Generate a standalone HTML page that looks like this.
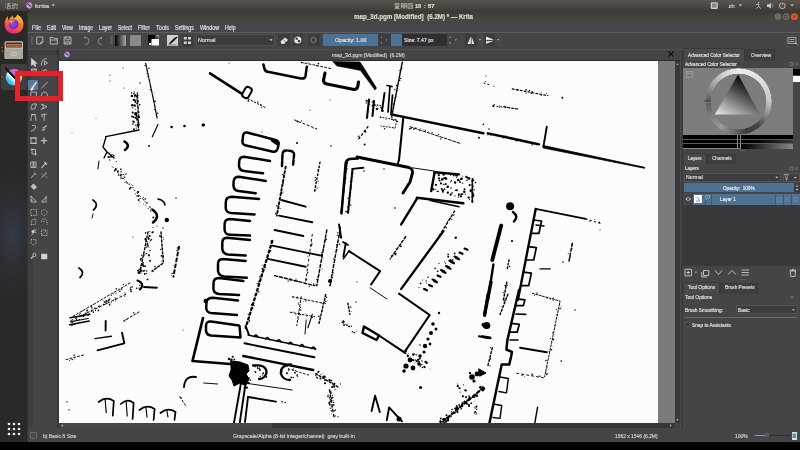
<!DOCTYPE html><html><head><meta charset="utf-8"><style>
*{margin:0;padding:0;box-sizing:border-box}
html,body{width:800px;height:450px;overflow:hidden;background:#000}
body{position:relative;font-family:"Liberation Sans",sans-serif}
.a{position:absolute}
.t{position:absolute;white-space:nowrap;line-height:1;transform-origin:0 0;-webkit-text-stroke:0.18px currentColor}
</style></head><body>
<div class="a" style="left:0px;top:0px;width:800px;height:11.5px;background:linear-gradient(#57524c,#46433e 70%,#3a3733);"></div>
<div class="a" style="left:0px;top:11px;width:28px;height:431px;background:#2b2928;"></div>
<div class="a" style="left:0px;top:160px;width:28px;height:150px;background:radial-gradient(ellipse 26px 62px at 12px 75px,rgba(60,72,98,0.55) 0%,rgba(50,58,78,0.35) 50%,rgba(43,41,40,0) 100%);"></div>
<div class="a" style="left:1px;top:64px;width:26px;height:26px;background:rgba(255,255,255,0.1);border-radius:2px"></div>
<div class="a" style="left:27px;top:11.5px;width:1px;height:431px;background:#353331;"></div>
<div class="a" style="left:28px;top:11.5px;width:772px;height:10.5px;background:linear-gradient(#3d3b37,#4b4843);"></div>
<div class="a" style="left:28px;top:22px;width:772px;height:10px;background:#464548;"></div>
<div class="a" style="left:28px;top:32px;width:772px;height:1px;background:#5d5c5f;"></div>
<div class="a" style="left:28px;top:33px;width:772px;height:16px;background:#454447;"></div>
<div class="a" style="left:28px;top:49px;width:772px;height:0.8px;background:#515053;"></div>
<div class="a" style="left:28px;top:49.8px;width:772px;height:11px;background:#444346;"></div>
<div class="a" style="left:28px;top:49.8px;width:29px;height:6px;background:#3d3c3f;border-right:1px solid #333235;border-bottom:1px solid #333235"></div>
<div class="a" style="left:28px;top:55px;width:31px;height:373px;background:#464447;"></div>
<div class="a" style="left:28px;top:55px;width:5px;height:373px;background:#3f3e41;"></div>
<div class="a" style="left:57px;top:48px;width:2px;height:380px;background:#38373a;"></div>
<div class="a" style="left:28.3px;top:80px;width:9.5px;height:10px;background:#587a9c;"></div>
<div class="a" style="left:59px;top:60px;width:621px;height:1px;background:#2a292b;"></div>
<div class="a" style="left:59px;top:61px;width:599px;height:362px;background:#fcfcfe;"></div>
<div class="a" style="left:658px;top:61px;width:17px;height:362px;background:#7b7a7d;"></div>
<div class="a" style="left:675px;top:61px;width:5px;height:362px;background:#39383b;"></div>
<div class="a" style="left:59px;top:423px;width:616px;height:5px;background:#38373a;"></div>
<div class="a" style="left:675px;top:423px;width:8px;height:5px;background:#444245;"></div>
<div class="a" style="left:680px;top:49.8px;width:3px;height:378px;background:#3d3c3f;border-left:0.6px solid #4a494c"></div>
<div class="a" style="left:683px;top:48px;width:117px;height:380px;background:#464447;"></div>
<div class="a" style="left:683px;top:48px;width:62px;height:13px;background:#4a494c;border:1px solid #39383b;border-bottom:none;border-radius:2px 2px 0 0"></div>
<div class="a" style="left:745px;top:49px;width:30px;height:12px;background:#3e3d40;border:1px solid #39383b;border-bottom:none"></div>
<div class="a" style="left:683px;top:68px;width:110px;height:67px;background:#7d7c7f;"></div>
<div class="a" style="left:705.4px;top:67.5px;width:67px;height:67px;background:conic-gradient(#ececec,#dedede 50deg,#c8c8c8 90deg,#8a8a8a 115deg,#464646 140deg,#3c3c3c 165deg,#6a6a6a 190deg,#9a9a9a 215deg,#7a7a7a 245deg,#5a5a5a 270deg,#9a9a9a 300deg,#d0d0d0 330deg,#ececec);border-radius:50%;-webkit-mask:radial-gradient(circle,transparent 27.6px,#000 28.1px,#000 32.9px,transparent 33.4px);mask:radial-gradient(circle,transparent 27.6px,#000 28.1px,#000 32.9px,transparent 33.4px)"></div>
<div class="a" style="left:793px;top:69px;width:7px;height:6px;background:#000;"></div>
<div class="a" style="left:793px;top:76px;width:7px;height:6px;background:#fff;"></div>
<div class="a" style="left:683px;top:134.7px;width:110px;height:14px;background:#000;"></div>
<div class="a" style="left:683px;top:148.3px;width:110px;height:0.8px;background:#8a8a8a;"></div>
<div class="a" style="left:683px;top:139.2px;width:110px;height:0.7px;background:#5a5a5a;"></div>
<div class="a" style="left:683px;top:143.2px;width:110px;height:0.7px;background:#5a5a5a;"></div>
<div class="a" style="left:740px;top:139.8px;width:53px;height:3.4px;background:linear-gradient(90deg,#000 30%,#3a3a3a);"></div>
<div class="a" style="left:740px;top:144px;width:53px;height:4.5px;background:linear-gradient(90deg,#000 5%,#888);"></div>
<div class="a" style="left:737px;top:135px;width:1px;height:14px;background:#888;"></div>
<div class="a" style="left:740px;top:135px;width:1px;height:14px;background:#888;"></div>
<div class="a" style="left:683px;top:152.5px;width:24px;height:11px;background:#4a494c;border:1px solid #39383b;border-bottom:none;border-radius:2px 2px 0 0"></div>
<div class="a" style="left:707px;top:154px;width:29px;height:9.5px;background:#3e3d40;border:1px solid #39383b;border-bottom:none"></div>
<div class="a" style="left:683.5px;top:172.5px;width:97px;height:9px;background:#3d3c3f;border:1px solid #545356;border-radius:1px"></div>
<div class="a" style="left:782.5px;top:172.5px;width:17.5px;height:9px;background:#3d3c3f;border:1px solid #545356"></div>
<div class="a" style="left:683.5px;top:183px;width:110px;height:9px;background:#4e7294;"></div>
<div class="a" style="left:793.5px;top:183px;width:6.5px;height:9px;background:#3d3c3f;"></div>
<div class="a" style="left:692.5px;top:193.5px;width:107.5px;height:11px;background:#4e7294;"></div>
<div class="a" style="left:693.8px;top:194.8px;width:8.7px;height:8.4px;background:#fafafa;"></div>
<div class="a" style="left:704.5px;top:193.5px;width:0.7px;height:11px;background:#3c5a76;"></div>
<div class="a" style="left:710.5px;top:193.5px;width:0.7px;height:11px;background:#3c5a76;"></div>
<div class="a" style="left:775px;top:193.5px;width:0.7px;height:11px;background:#3c5a76;"></div>
<div class="a" style="left:783.3px;top:193.5px;width:0.7px;height:11px;background:#3c5a76;"></div>
<div class="a" style="left:791px;top:193.5px;width:0.7px;height:11px;background:#3c5a76;"></div>
<div class="a" style="left:683px;top:204.5px;width:117px;height:61.5px;background:#39383b;"></div>
<div class="a" style="left:683px;top:281.5px;width:37px;height:12px;background:#4a494c;border:1px solid #39383b;border-bottom:none;border-radius:2px 2px 0 0"></div>
<div class="a" style="left:720px;top:283px;width:38px;height:10.5px;background:#3e3d40;border:1px solid #39383b;border-bottom:none"></div>
<div class="a" style="left:736px;top:305px;width:61.5px;height:9px;background:#3d3c3f;border:1px solid #545356;border-radius:1px"></div>
<div class="a" style="left:685px;top:317px;width:112px;height:1px;background:#6a696c;"></div>
<div class="a" style="left:684.7px;top:321.9px;width:5.6px;height:5.6px;background:#38373a;border:1px solid #505052"></div>
<div class="a" style="left:30.5px;top:36px;width:2.5px;height:8.5px;background:#59585b;"></div>
<div class="a" style="left:109.8px;top:36px;width:3px;height:8px;background:#59585b;"></div>
<div class="a" style="left:114.8px;top:35px;width:11.3px;height:10.5px;background:linear-gradient(90deg,#000,#a8a8a8);border-radius:1px"></div>
<div class="a" style="left:130px;top:35px;width:11px;height:10.5px;background:#8a898b;border-radius:1px"></div>
<div class="a" style="left:166.5px;top:35px;width:11.5px;height:10.5px;background:#cfcfcf;"></div>
<div class="a" style="left:182px;top:34.5px;width:11px;height:12px;background:#3c3b3e;"></div>
<div class="a" style="left:195.6px;top:33.7px;width:79.4px;height:12.3px;background:#3c3b3e;border:1px solid #515053;border-radius:1px"></div>
<div class="a" style="left:278px;top:34px;width:12px;height:12px;background:#3c3b3e;"></div>
<div class="a" style="left:292.5px;top:34px;width:10.5px;height:12px;background:#3c3b3e;"></div>
<div class="a" style="left:307.5px;top:34px;width:12.5px;height:12px;background:#3c3b3e;"></div>
<div class="a" style="left:322.5px;top:34px;width:55.5px;height:12px;background:#4e7294;"></div>
<div class="a" style="left:378px;top:34px;width:13px;height:12px;background:#3c3b3e;"></div>
<div class="a" style="left:391px;top:34px;width:11.4px;height:12px;background:#4e7294;"></div>
<div class="a" style="left:402.4px;top:34px;width:45px;height:12px;background:#2f2e31;"></div>
<div class="a" style="left:465.4px;top:34px;width:11.6px;height:12px;background:#3c3b3e;"></div>
<div class="a" style="left:483.8px;top:34px;width:11.2px;height:12px;background:#3c3b3e;"></div>
<div class="a" style="left:785.5px;top:34.5px;width:13.5px;height:12.5px;background:#3c3b3e;border:1px solid #505053"></div>
<div class="a" style="left:28px;top:428px;width:772px;height:14px;background:#464447;"></div>
<div class="a" style="left:59px;top:423px;width:213px;height:5px;background:#48474a;"></div>
<div class="a" style="left:755px;top:434.5px;width:34.5px;height:1.5px;background:#2f2e31;"></div>
<div class="a" style="left:755px;top:434.5px;width:10.5px;height:1.5px;background:#7a9cc0;"></div>
<div class="a" style="left:765px;top:432.5px;width:4px;height:4.5px;background:#5a595c;border-radius:1px"></div>
<div class="a" style="left:791.7px;top:432px;width:5.3px;height:8px;background:#d8dfe8;"></div>
<div class="a" style="left:30px;top:432px;width:7px;height:7px;background:transparent;border:1px solid #69686b;border-radius:1px"></div>
<div class="a" style="left:0px;top:442px;width:800px;height:8px;background:#000;"></div>
<svg class="a" style="left:0;top:0" width="800" height="450" viewBox="0 0 800 450"><defs><clipPath id="cv"><rect x="59" y="61" width="599" height="362"/></clipPath></defs><g clip-path="url(#cv)" fill="#000" stroke="#000" stroke-linecap="round" stroke-linejoin="round"><g fill="none"><path d="M145.7,63.3 L154.5,104.4 L157,118" stroke-width="1.23" stroke-dasharray="4 1.2"/><path d="M157.9,124.4 L152.3,136.7" stroke-width="1.14"/><path d="M137.5,95 L138.5,128" stroke-width="1.23" stroke-dasharray="3 2"/><path d="M105.7,136.7 L139,130" stroke-width="1.33"/><path d="M106,137 L103,147 L107,152 L104,158 M107,152 L114,158" stroke-width="1.33"/><path d="M124.5,141.5 Q131,145.5 125,150" stroke-width="2.47"/><path d="M99,161 L97.9,168.9" stroke-width="1.04"/><path d="M112.3,166.7 L147.9,204.4" stroke-width="0.95" stroke-dasharray="1 3"/><path d="M93,200 Q99.5,204.5 93.5,210" stroke-width="1.71"/><path d="M93,214 L92,218" stroke-width="0.95"/><path d="M153,210 Q161,216 153,222.5" stroke-width="2.47"/><path d="M158,199 Q164,200 165,205" stroke-width="1.52"/><path d="M79,268 Q85.5,272.5 80,277.5" stroke-width="1.8"/><path d="M148,232 L140,272" stroke-width="1.33" stroke-dasharray="2 2"/><path d="M161,232 L163.4,263 L152,271" stroke-width="1.42" stroke-dasharray="2 2"/><path d="M179,246.7 L173.4,276.7" stroke-width="1.9" stroke-dasharray="3 3"/><path d="M137.5,280.5 Q145.5,283.5 140,289.5" stroke-width="2.09"/><path d="M144,287 L156.8,287.8" stroke-width="1.9"/><path d="M130,283 L72.3,316.7" stroke-width="0.95" stroke-dasharray="2 2"/><path d="M125.7,294.4 L70,321" stroke-width="0.95" stroke-dasharray="2 2.5"/><path d="M70,317.8 L90,314.4" stroke-width="1.42"/><path d="M72,321.5 L88,318.5" stroke-width="1.23"/><path d="M105.7,321 L105.6,330.5" stroke-width="1.9"/><path d="M123.4,321 L139,312" stroke-width="0.95" stroke-dasharray="2 2"/><path d="M69.5,324.7 L89.3,321" stroke-width="1.42"/><path d="M95,338.6 L111.4,336.3" stroke-width="1.42"/><path d="M97.5,350.3 L124.3,343.3 L122,332.8" stroke-width="1.9"/><path d="M66,359.6 L83.5,355" stroke-width="0.95" stroke-dasharray="2 2"/><path d="M98.6,402 Q106.19999999999999,396 113.8,401 L112.8,415.6" stroke-width="1.71"/><path d="M105.19999999999999,400 L106.19999999999999,412.6" stroke-width="1.14"/><path d="M120.8,404 Q127.19999999999999,398 133.6,403 L132.6,419" stroke-width="1.71"/><path d="M126.19999999999999,402 L127.19999999999999,416" stroke-width="1.14"/><path d="M139.4,410 Q147.0,404 154.6,409 L153.6,420" stroke-width="1.71"/><path d="M146.0,408 L147.0,417" stroke-width="1.14"/><path d="M160.4,413 Q167.95,407 175.5,412 L174.5,420" stroke-width="1.71"/><path d="M166.95,411 L167.95,417" stroke-width="1.14"/><path d="M184,387 Q185,375 196,377" stroke-width="1.9"/><path d="M180,397 L186,406" stroke-width="0.95" stroke-dasharray="2 2"/><path d="M210,73.3 L241.2,93.3" stroke-width="2.56"/><path d="M-2.5,-3.5 L2.5,-3.5 Q5.5,-3.5 5.5,-1 L5.5,1 Q5.5,3.5 2.5,3.5 L-2.5,3.5 Q-5.5,3.5 -5.5,1 L-5.5,-1 Q-5.5,-3.5 -2.5,-3.5 Z" transform="translate(247,92.5) rotate(-60)" stroke-width="2"/><path d="M248,98.9 L265.7,107.8" stroke-width="0.95" stroke-dasharray="1.5 2"/><path d="M263.4,64.4 L264.5,69 Q265.5,72 269,72 L301,78.5 Q305,79 305.5,76 L306.8,66.7" stroke-width="2.47"/><path d="M301.2,62.2 L332.3,68.9" stroke-width="0.95" stroke-dasharray="2 2"/><path d="M325,73 L323.5,80 Q323.5,83.5 327,84 L354,89.5 Q358,89 358,85 L358.5,82" stroke-width="3.13"/><path d="M294.6,120 L316.8,128.9" stroke-width="0.95" stroke-dasharray="2 2.5"/><path d="M247,132.5 L275.5,140 Q279.5,141.5 278.5,145 L277.5,149 Q276.5,152.5 272,151.5 L246,145.5 Q242,144.5 242.5,141 L243,136 Q243.5,132 247,132.5 Z" stroke-width="2.47"/><path d="M282,166 L282.5,154 Q283,150 287,150.5 L291,151 Q294.5,152 294,155.5 L293,166" stroke-width="2.47" stroke-dasharray="5 1.5"/><path d="M270,161 L244,156.7 Q239.3,156.7 239.2,161.5 L239,166 Q239.5,170.5 244,171 L263,173.3" stroke-width="2.47"/><path d="M265.7,181 L239,176.7 Q234,176.7 233.6,181.5 L233.5,186 Q234,190.5 238.5,191 L255.7,193.3" stroke-width="2.47"/><path d="M259,199 L232,196.7 Q226,196.7 225.8,202 L225.7,208 Q226,212.5 231,213 L254.6,214.4" stroke-width="2.47"/><path d="M250,221 L230,219 Q224.8,219 224.6,224 L224.6,230 Q225,234.5 230,234.8 L250,235.6" stroke-width="2.47"/><path d="M285.7,166.7 L276.8,215.6" stroke-width="1.9" stroke-dasharray="2 2.5"/><path d="M281.2,200 L305.7,206.7" stroke-width="1.9"/><path d="M279,215.6 L312.3,222.2" stroke-width="1.9"/><path d="M274.6,230 L303.4,236" stroke-width="1.9"/><path d="M320,162.2 L314.6,191.1" stroke-width="1.42" stroke-dasharray="1.5 2.5"/><path d="M346.8,162.2 L341.2,213.3" stroke-width="1.9" stroke-dasharray="5 1.5"/><path d="M339,224.4 L341.2,237.8" stroke-width="1.9"/><path d="M272.3,140.5 L277.5,144" stroke-width="2.85"/><path d="M250,240 L227,237.8 Q222.3,237.8 222.3,243 L222.3,249 Q223,254 228,254.5 L245.7,255.6" stroke-width="2.47"/><path d="M245.7,261 L223,259 Q218,259 218,264 L218,271 Q219,276 224,276.5 L246.8,277.8" stroke-width="2.47"/><path d="M243.4,281 L219,278 Q213.6,278 213.5,283 L213.4,289 Q214,293.5 219,294 L239,295" stroke-width="2.47"/><path d="M238,300.5 L213,297.8 Q206.8,297.8 206.5,302.5 L206.2,308 Q206.5,312.5 211,313 L237,315" stroke-width="2.47"/><path d="M239,325.5 L211,321.5 Q206,321 206,326 L206,331 Q206.5,335 211,335.5 L240.5,337.5 L239.5,326" stroke-width="2.47"/><path d="M272.3,241 L245.7,327.8" stroke-width="2.28" stroke-dasharray="2 3"/><path d="M272.3,245.6 L321.2,255.6" stroke-width="1.9"/><path d="M267.9,258.9 L305.7,266.7" stroke-width="1.9"/><path d="M274.6,275.6 L314.6,285.6" stroke-width="1.42" stroke-dasharray="3 2"/><path d="M326.8,230 L316.8,285.6" stroke-width="1.42" stroke-dasharray="3 2"/><path d="M340,230 L330,285.6" stroke-width="1.42" stroke-dasharray="3 2"/><path d="M312.3,234.4 L305.7,281" stroke-width="0.95" stroke-dasharray="2 3"/><path d="M345.7,243.3 L343.4,256.7" stroke-width="1.9"/><path d="M292.3,296.7 L323.4,303.3" stroke-width="0.95" stroke-dasharray="2 2"/><path d="M301.2,296.7 L296.8,325.6" stroke-width="0.95" stroke-dasharray="2 2"/><path d="M312.3,314.4 L307.9,327.8" stroke-width="1.14"/><path d="M325.7,294.4 L319,323.3" stroke-width="1.42" stroke-dasharray="2 2"/><path d="M290.1,312.2 L314.6,316.7" stroke-width="0.95" stroke-dasharray="2 2"/><path d="M245.6,325.8 L249,335" stroke-width="1.9"/><path d="M248,335 L315.6,349" stroke-width="1.42"/><path d="M254.0,336.6568047337278 Q256.0,333.1568047337278 258.0,337.1568047337278" stroke-width="1.42"/><path d="M265.5,339.03846153846155 Q267.5,335.53846153846155 269.5,339.53846153846155" stroke-width="1.42"/><path d="M277.0,341.42011834319527 Q279.0,337.92011834319527 281.0,341.92011834319527" stroke-width="1.42"/><path d="M288.5,343.801775147929 Q290.5,340.301775147929 292.5,344.301775147929" stroke-width="1.42"/><path d="M300.0,346.1834319526627 Q302.0,342.6834319526627 304.0,346.6834319526627" stroke-width="1.42"/><path d="M311.5,348.56508875739644 Q313.5,345.06508875739644 315.5,349.06508875739644" stroke-width="1.42"/><path d="M244.5,343.3 L314.4,357.3" stroke-width="1.9"/><path d="M243.3,356 L313.2,370" stroke-width="2.38"/><path d="M203,318 L192.5,361 L230,364" stroke-width="2.66"/><path d="M253,365.5 Q267,364 266.5,373 Q265,378.5 259,379" stroke-width="2.28"/><path d="M291,364.5 Q280,365 281,374 Q283,380 290,380" stroke-width="2.28"/><path d="M292,370 L308.6,375" stroke-width="0.95" stroke-dasharray="1.5 2.5"/><path d="M315.6,373.6 L338.9,387.6" stroke-width="1.42" stroke-dasharray="2 2"/><path d="M329.5,390 L334.2,418" stroke-width="1.42" stroke-dasharray="2 3"/><path d="M241,383 L234,422.6" stroke-width="1.9"/><path d="M245.6,383 L239.8,422.6" stroke-width="1.9"/><path d="M244.5,383 L292.2,390" stroke-width="0.95"/><path d="M248,397 L276,401.6" stroke-width="1.9"/><path d="M248,397 L245,422" stroke-width="1.9"/><path d="M281.7,401.6 L287,403" stroke-width="0.95" stroke-dasharray="1 2"/><path d="M203.7,383 L217.6,384" stroke-width="0.95"/><path d="M306.2,320 L305,334" stroke-width="0.95"/><path d="M402.3,62.2 L392.3,113.3" stroke-width="1.42" stroke-dasharray="2.5 1"/><path d="M387,85.5 L392,86.5 M390,86 L388,112 M392.5,95 L391,113" stroke-width="1.71"/><path d="M384.5,93 L382,111" stroke-width="1.9"/><path d="M369,99.5 L367,118 M374,101 L372.5,116" stroke-width="2.09"/><path d="M391.2,114.4 L483.4,133.3" stroke-width="2.47"/><path d="M403.4,116.7 L399,160 L397.9,163.3" stroke-width="2.09"/><path d="M410,126.7 L460,143.3" stroke-width="0.95" stroke-dasharray="3 1.5"/><path d="M367.9,126.7 L357.9,140" stroke-width="1.42" stroke-dasharray="1.5 3"/><path d="M380,117 L396.8,120 L395,128 L381,126" stroke-width="0.95" stroke-dasharray="1 2"/><path d="M357,157 L409,167.5 Q413,169 412.5,173 L410,182 L403,193" stroke-width="2.85"/><path d="M358,158.5 L349.5,159 Q345.5,160.5 345.5,164.5 L341.5,213.5" stroke-width="2.47"/><path d="M352.5,169.5 L348,213" stroke-width="2.09" stroke-dasharray="6 1.5"/><path d="M352.3,168.9 L363.4,167.8" stroke-width="1.9"/><path d="M412.3,167.8 L434.6,171.1" stroke-width="0.95"/><path d="M434.6,172.2 L459,174.4" stroke-width="2.38"/><path d="M434.6,172.2 L431.2,191.1" stroke-width="2.38"/><path d="M416.8,197.8 L463.4,203.3" stroke-width="2.38"/><path d="M430.1,200.5 L459,206.7" stroke-width="1.42"/><path d="M416.8,198.9 L401.2,224.4" stroke-width="2.38"/><path d="M472.3,180 L472.3,202.2" stroke-width="1.9" stroke-dasharray="2 2"/><path d="M454.6,211 L436.8,240" stroke-width="1.42" stroke-dasharray="2 2.5"/><path d="M340,226.7 L340,235.6" stroke-width="1.42"/><path d="M443.4,231.1 L401.2,288.9" stroke-width="2.38"/><path d="M399,293.7 L429.7,315 L404.3,352.3" stroke-width="2.09"/><path d="M349,251.1 L380.1,271.1 L371.2,284.4" stroke-width="1.9"/><path d="M349,251 L343.4,258.9" stroke-width="1.42"/><path d="M370.1,287.8 L386.8,298.9" stroke-width="0.95"/><path d="M343,242 L348,245" stroke-width="1.71"/><path d="M405.7,236.7 L390.1,258.9" stroke-width="1.42" stroke-dasharray="2.5 2"/><path d="M424.0,289.0 l3,1.3" stroke-width="2.09"/><path d="M432.5,279.5 l3,1.3" stroke-width="2.09"/><path d="M441.0,270.0 l3,1.3" stroke-width="2.09"/><path d="M449.5,260.5 l3,1.3" stroke-width="2.09"/><path d="M429.0,285.0 l3,1.3" stroke-width="2.09"/><path d="M437.5,275.5 l3,1.3" stroke-width="2.09"/><path d="M446.0,266.0 l3,1.3" stroke-width="2.09"/><path d="M454.5,256.5 l3,1.3" stroke-width="2.09"/><path d="M434.0,281.0 l3,1.3" stroke-width="2.09"/><path d="M442.5,271.5 l3,1.3" stroke-width="2.09"/><path d="M451.0,262.0 l3,1.3" stroke-width="2.09"/><path d="M459.5,252.5 l3,1.3" stroke-width="2.09"/><path d="M447.5,267.5 l3,1.3" stroke-width="2.09"/><path d="M456.0,258.0 l3,1.3" stroke-width="2.09"/><path d="M464.5,248.5 l3,1.3" stroke-width="2.09"/><path d="M487.9,294.4 L484.6,315.6" stroke-width="2.85"/><path d="M347.9,303.3 L350,314.4" stroke-width="1.42" stroke-dasharray="1.5 2"/><path d="M362.5,333 L364,326.5 L379,335.5 L376.5,340 Z" stroke-width="2.47"/><path d="M379,335.5 L404.3,352.3" stroke-width="2.09"/><path d="M371.6,411 L375.1,395.8 L379.8,412" stroke-width="1.9"/><path d="M386.8,420.2 L389.1,407.4 L402,421.4" stroke-width="1.9"/><path d="M483.5,387.6 L441.6,422.6" stroke-width="2.09" stroke-dasharray="3 2.5"/><path d="M478.9,336.3 L489,338" stroke-width="1.9"/><path d="M512.3,88.9 L547.9,95.6" stroke-width="1.14" stroke-dasharray="2 2"/><path d="M503.4,106.7 L516.8,108.9" stroke-width="0.95" stroke-dasharray="2 2"/><path d="M493,106 L518,109" stroke-width="0.95" stroke-dasharray="1 3"/><path d="M487.9,133.3 L539,144.4" stroke-width="2.38" stroke-dasharray="6 1"/><path d="M546.8,126.7 L543.4,146.7" stroke-width="1.9"/><path d="M484,83 L490,85" stroke-width="0.95" stroke-dasharray="1 3"/><path d="M535.7,208.9 L585.7,218.9" stroke-width="1.9"/><path d="M585.7,218.9 L600,223.3" stroke-width="0.95" stroke-dasharray="1.5 3"/><path d="M535.7,209 L517.9,300" stroke-width="2.38"/><path d="M533.5483516483517,220 L541.5483516483517,221 L538.9468131868132,233.3 L530.9468131868132,233.3" stroke-width="1.71"/><path d="M528.3257142857143,246.7 L536.3257142857143,247.7 L533.7241758241759,260 L525.7241758241759,260" stroke-width="1.71"/><path d="M523.3378021978023,272.2 L531.3378021978023,273.2 L528.7167032967034,285.6 L520.7167032967034,285.6" stroke-width="1.71"/><path d="M501.2,225.6 L492.3,260" stroke-width="3.8"/><path d="M493.4,264.4 L487.9,300" stroke-width="2.38"/><path d="M513,212 Q519,216.5 514,221.5" stroke-width="2.47"/><path d="M572.3,243.3 L569,261.1" stroke-width="1.42" stroke-dasharray="3 2"/><path d="M540.1,268.9 L550.1,268.9" stroke-width="1.42"/><path d="M506.8,282.2 L503.4,300" stroke-width="1.42" stroke-dasharray="2 2"/><path d="M509,260 L507,270" stroke-width="1.42" stroke-dasharray="1.5 2"/><path d="M519,290 L507.4,340 L506.4,349.5 L512,352 L511,357 L509.2,364.6 L501.7,364.6 L489.4,423.2" stroke-width="2.47"/><path d="M516.9352,298.9 L524.9352,299.9 L523.3808,305.6 L515.3808,305.6" stroke-width="1.71"/><path d="M511.2744,323.3 L519.2744,324.3 L517.2096,332.2 L509.2096,332.2" stroke-width="1.71"/><path d="M516,314 L525.7,314.4" stroke-width="1.71"/><path d="M510,340 L518,340" stroke-width="1.71"/><path d="M507.9,294.4 L500.1,314.4" stroke-width="1.42" stroke-dasharray="2 2"/><path d="M492.3,347.8 L487.9,365.6" stroke-width="1.42" stroke-dasharray="2 2"/><path d="M491,282 L484.6,314.4" stroke-width="3.42"/><path d="M482.3,336.7 L490.1,337.8" stroke-width="2.85"/><path d="M532.3,293.3 L560.1,301.1 L550.1,350 L544.6,376.7" stroke-width="0.95" stroke-dasharray="2 1.5"/><path d="M520.1,347.8 L546.8,352.2" stroke-width="1.9"/><path d="M516.8,373.3 L543.4,377.8" stroke-width="0.95" stroke-dasharray="2 3"/><path d="M500,377 L508.3,378.5 L506.5,392.9 L499,391.5" stroke-width="1.42"/><path d="M494.5,404.3 L501.7,405.5 L500,418.4 L493,417.5" stroke-width="1.42"/><path d="M537.6,407.1 L534.8,423.2" stroke-width="1.42"/><path d="M536,225 L544,226" stroke-width="1.42"/></g><g><path class="f" d="M333,61.5 L360,62 L363,66.5 L376.5,88 L375,90 L360.5,70.5 L348,68 L337,66 Z" stroke-width="0.6"/><path class="f" d="M231,361 L240,362 L248,365 L249,371 L246,374 L249,379 L246,385 L240,383 L234,386 L232,380 L229,376 L231,370 Z" stroke-width="1"/><path class="f" d="M543.4,145.5 L644.6,167.3 L644.6,168.3 L543.4,148 Z" stroke-width="0.8"/><path class="f" d="M479,369 L486,373 L480,376 Z" stroke-width="1"/></g><g stroke="none"><circle cx="137.2" cy="103.5" r="0.96"/><circle cx="133.9" cy="93.8" r="0.76"/><circle cx="134.1" cy="93.3" r="0.53"/><circle cx="138.1" cy="107.7" r="0.56"/><circle cx="132.8" cy="107.7" r="0.59"/><circle cx="133.7" cy="99.8" r="1.16"/><circle cx="136.2" cy="113.5" r="1.18"/><circle cx="131.6" cy="93.0" r="0.70"/><circle cx="137.0" cy="96.5" r="0.72"/><circle cx="138.3" cy="122.7" r="0.91"/><circle cx="136.5" cy="115.9" r="0.88"/><circle cx="137.2" cy="93.3" r="0.64"/><circle cx="136.2" cy="117.5" r="0.72"/><circle cx="135.8" cy="113.8" r="0.71"/><circle cx="134.6" cy="122.1" r="0.67"/><circle cx="135.3" cy="113.4" r="1.11"/><circle cx="137.3" cy="119.4" r="1.19"/><circle cx="134.9" cy="95.6" r="1.03"/><circle cx="134.5" cy="96.9" r="0.53"/><circle cx="133.8" cy="117.2" r="0.90"/><circle cx="137.5" cy="125.1" r="0.99"/><circle cx="134.9" cy="114.2" r="0.82"/><circle cx="133.0" cy="124.0" r="0.83"/><circle cx="138.7" cy="116.7" r="0.99"/><circle cx="132.2" cy="116.5" r="1.08"/><circle cx="135.5" cy="102.0" r="0.97"/><circle cx="134.3" cy="91.9" r="0.62"/><circle cx="137.4" cy="95.4" r="1.04"/><circle cx="136.1" cy="95.9" r="0.77"/><circle cx="139.1" cy="124.8" r="0.81"/><circle cx="132.7" cy="112.6" r="1.07"/><circle cx="137.7" cy="124.6" r="0.79"/><circle cx="132.2" cy="105.2" r="1.17"/><circle cx="136.6" cy="96.7" r="0.66"/><circle cx="134.7" cy="100.1" r="0.91"/><circle cx="138.1" cy="101.0" r="0.79"/><circle cx="134.5" cy="105.4" r="1.17"/><circle cx="135.6" cy="117.9" r="0.93"/><circle cx="138.8" cy="117.2" r="1.13"/><circle cx="133.3" cy="121.6" r="1.06"/><circle cx="135.7" cy="106.3" r="0.57"/><circle cx="138.6" cy="115.5" r="0.55"/><circle cx="136.9" cy="99.0" r="0.74"/><circle cx="137.6" cy="92.8" r="0.61"/><circle cx="135.2" cy="94.9" r="0.52"/><circle cx="135.4" cy="125.2" r="0.60"/><circle cx="135.7" cy="100.8" r="0.75"/><circle cx="131.9" cy="95.9" r="1.20"/><circle cx="135.3" cy="109.2" r="0.56"/><circle cx="135.4" cy="94.9" r="0.69"/><circle cx="138.4" cy="123.2" r="0.52"/><circle cx="136.2" cy="128.1" r="0.60"/><circle cx="138.7" cy="112.0" r="0.87"/><circle cx="133.9" cy="129.3" r="0.99"/><circle cx="135.6" cy="101.1" r="0.62"/><circle cx="171.6" cy="127" r="1.3"/><circle cx="184.5" cy="126" r="1.3"/><circle cx="203.5" cy="125" r="1.4"/><circle cx="149" cy="146" r="0.9"/><circle cx="110" cy="75" r="0.6"/><circle cx="110" cy="81" r="0.6"/><circle cx="124" cy="88" r="0.6"/><circle cx="140" cy="83" r="0.7"/><circle cx="123" cy="68" r="0.5"/><circle cx="96" cy="118" r="0.4"/><circle cx="72" cy="133" r="0.4"/><circle cx="166.8" cy="220" r="2.2"/><circle cx="147" cy="203" r="0.8"/><circle cx="150" cy="207" r="0.8"/><circle cx="176" cy="198" r="0.7"/><circle cx="153" cy="232" r="0.8"/><circle cx="160" cy="236" r="0.9"/><circle cx="133" cy="237" r="0.6"/><circle cx="163" cy="228" r="0.7"/><circle cx="157" cy="226" r="0.6"/><circle cx="141.9" cy="263.9" r="0.95"/><circle cx="147.4" cy="244.8" r="0.97"/><circle cx="138.4" cy="273.0" r="0.96"/><circle cx="140.5" cy="265.8" r="0.56"/><circle cx="145.0" cy="252.9" r="0.42"/><circle cx="149.8" cy="231.5" r="0.58"/><circle cx="140.5" cy="260.0" r="0.71"/><circle cx="138.2" cy="270.7" r="1.07"/><circle cx="147.1" cy="246.3" r="0.56"/><circle cx="148.7" cy="239.0" r="0.84"/><circle cx="139.2" cy="269.3" r="0.74"/><circle cx="141.7" cy="258.4" r="0.46"/><circle cx="141.0" cy="258.7" r="0.95"/><circle cx="142.4" cy="263.0" r="0.52"/><circle cx="142.7" cy="264.9" r="0.96"/><circle cx="140.8" cy="272.9" r="0.68"/><circle cx="139.4" cy="271.4" r="0.52"/><circle cx="149.6" cy="235.9" r="1.03"/><circle cx="143.5" cy="265.8" r="0.98"/><circle cx="139.4" cy="273.0" r="0.65"/><circle cx="145.9" cy="254.5" r="0.41"/><circle cx="139.5" cy="272.6" r="0.77"/><circle cx="140.9" cy="271.1" r="1.01"/><circle cx="143.0" cy="266.6" r="0.58"/><circle cx="147.6" cy="243.2" r="0.81"/><circle cx="147.1" cy="241.5" r="0.49"/><circle cx="141.5" cy="270.2" r="0.72"/><circle cx="141.8" cy="255.3" r="0.69"/><circle cx="140.7" cy="270.4" r="0.77"/><circle cx="146.6" cy="253.5" r="0.71"/><circle cx="205.7" cy="301" r="2.2"/><circle cx="113.7" cy="155.6" r="0.88"/><circle cx="111.1" cy="156.8" r="0.84"/><circle cx="120.7" cy="169.3" r="0.71"/><circle cx="118.4" cy="170.8" r="0.46"/><circle cx="121.1" cy="169.2" r="0.57"/><circle cx="124.7" cy="177.3" r="0.74"/><circle cx="122.4" cy="178.2" r="0.67"/><circle cx="121.1" cy="171.8" r="0.71"/><circle cx="123.2" cy="174.4" r="0.72"/><circle cx="115.8" cy="168.7" r="0.82"/><circle cx="125.0" cy="182.3" r="0.56"/><circle cx="117.7" cy="171.5" r="0.90"/><circle cx="112.0" cy="154.4" r="0.67"/><circle cx="110.0" cy="152.6" r="0.44"/><circle cx="121.0" cy="174.7" r="0.94"/><circle cx="109.5" cy="157.0" r="0.80"/><circle cx="108.4" cy="157.1" r="0.98"/><circle cx="109.8" cy="160.0" r="0.64"/><circle cx="115.8" cy="169.2" r="0.90"/><circle cx="111.1" cy="156.3" r="0.71"/><circle cx="116.3" cy="161.5" r="0.59"/><circle cx="126.0" cy="173.9" r="0.73"/><circle cx="143.3" cy="197.3" r="0.60"/><circle cx="145.5" cy="205.0" r="0.44"/><circle cx="153.3" cy="217.6" r="0.98"/><circle cx="133.7" cy="187.5" r="0.42"/><circle cx="150.6" cy="209.1" r="0.48"/><circle cx="138.6" cy="200.0" r="0.89"/><circle cx="138.1" cy="192.0" r="0.95"/><circle cx="143.3" cy="204.0" r="0.45"/><circle cx="130.5" cy="187.5" r="0.66"/><circle cx="129.7" cy="188.9" r="0.78"/><circle cx="152.0" cy="209.1" r="0.91"/><circle cx="130.0" cy="188.5" r="0.67"/><circle cx="138.2" cy="196.0" r="0.96"/><circle cx="138.4" cy="192.2" r="0.72"/><circle cx="137.8" cy="191.2" r="0.50"/><circle cx="132.7" cy="185.5" r="0.59"/><circle cx="136.4" cy="195.7" r="0.57"/><circle cx="144.0" cy="199.8" r="0.61"/><circle cx="131.6" cy="184.7" r="0.41"/><circle cx="148.1" cy="208.6" r="0.51"/><circle cx="139.8" cy="201.8" r="0.46"/><circle cx="150.8" cy="211.0" r="0.70"/><circle cx="146.6" cy="271.0" r="0.75"/><circle cx="143.2" cy="262.5" r="0.64"/><circle cx="144.4" cy="270.6" r="0.85"/><circle cx="149.0" cy="247.4" r="0.44"/><circle cx="152.3" cy="232.4" r="0.92"/><circle cx="151.1" cy="239.3" r="0.46"/><circle cx="143.2" cy="271.0" r="0.87"/><circle cx="150.4" cy="240.7" r="0.61"/><circle cx="150.1" cy="250.5" r="0.71"/><circle cx="145.5" cy="239.2" r="1.08"/><circle cx="149.0" cy="255.3" r="1.08"/><circle cx="149.5" cy="242.1" r="0.40"/><circle cx="148.3" cy="246.0" r="0.75"/><circle cx="149.0" cy="236.1" r="0.40"/><circle cx="151.5" cy="239.8" r="0.68"/><circle cx="153.1" cy="227.6" r="0.61"/><circle cx="148.2" cy="237.8" r="0.77"/><circle cx="145.1" cy="266.2" r="0.90"/><circle cx="146.4" cy="273.4" r="0.63"/><circle cx="147.5" cy="279.4" r="0.91"/><circle cx="150.0" cy="260.7" r="0.98"/><circle cx="144.7" cy="274.0" r="0.91"/><circle cx="88.2" cy="315.3" r="0.71"/><circle cx="106.3" cy="300.9" r="0.88"/><circle cx="86.0" cy="313.5" r="0.94"/><circle cx="95.1" cy="307.9" r="0.54"/><circle cx="139.0" cy="288.0" r="0.62"/><circle cx="132.2" cy="286.9" r="0.74"/><circle cx="98.8" cy="306.3" r="0.81"/><circle cx="109.6" cy="304.7" r="0.88"/><circle cx="91.4" cy="311.2" r="0.72"/><circle cx="98.4" cy="310.4" r="0.84"/><circle cx="124.8" cy="296.1" r="0.56"/><circle cx="93.4" cy="312.1" r="0.84"/><circle cx="76.6" cy="319.2" r="0.63"/><circle cx="108.3" cy="300.8" r="0.86"/><circle cx="99.5" cy="305.8" r="0.45"/><circle cx="131.1" cy="291.5" r="0.85"/><circle cx="120.0" cy="295.3" r="0.41"/><circle cx="136.7" cy="288.3" r="0.80"/><circle cx="94.5" cy="308.3" r="0.57"/><circle cx="106.5" cy="303.3" r="0.68"/><circle cx="131.2" cy="287.1" r="0.52"/><circle cx="75.2" cy="316.9" r="0.41"/><circle cx="109.3" cy="299.4" r="0.98"/><circle cx="111.4" cy="302.0" r="0.53"/><circle cx="79.4" cy="319.6" r="0.75"/><circle cx="130.7" cy="289.8" r="0.97"/><circle cx="130.5" cy="287.9" r="0.71"/><circle cx="81.8" cy="315.0" r="0.54"/><circle cx="81.7" cy="316.5" r="0.41"/><circle cx="139.8" cy="285.2" r="0.67"/><circle cx="106.1" cy="303.8" r="0.57"/><circle cx="103.1" cy="300.7" r="0.40"/><circle cx="81.3" cy="315.1" r="0.46"/><circle cx="73.0" cy="321.5" r="0.85"/><circle cx="105.9" cy="302.2" r="0.60"/><circle cx="69.8" cy="324.5" r="0.58"/><circle cx="99.3" cy="307.3" r="0.42"/><circle cx="113.8" cy="293.7" r="0.54"/><circle cx="74.0" cy="324.1" r="0.53"/><circle cx="95.5" cy="310.4" r="0.59"/><circle cx="70.9" cy="321.6" r="0.81"/><circle cx="87.1" cy="310.7" r="0.87"/><circle cx="91.8" cy="309.0" r="0.42"/><circle cx="83.5" cy="316.4" r="0.78"/><circle cx="88.5" cy="314.3" r="0.42"/><circle cx="74.9" cy="324.4" r="0.64"/><circle cx="103.5" cy="304.4" r="0.77"/><circle cx="72.0" cy="325.4" r="0.73"/><circle cx="67" cy="402" r="0.7"/><circle cx="69" cy="410" r="0.7"/><circle cx="203" cy="125" r="1.5"/><circle cx="297" cy="143" r="1"/><circle cx="331" cy="146" r="0.8"/><circle cx="330" cy="281" r="2"/><circle cx="234.4" cy="368.3" r="0.82"/><circle cx="234.9" cy="361.7" r="0.67"/><circle cx="248.9" cy="383.5" r="0.68"/><circle cx="244.4" cy="387.5" r="0.86"/><circle cx="234.0" cy="361.2" r="0.57"/><circle cx="239.5" cy="365.6" r="0.69"/><circle cx="233.3" cy="367.3" r="1.21"/><circle cx="246.0" cy="378.8" r="0.83"/><circle cx="241.2" cy="372.6" r="0.77"/><circle cx="231.4" cy="359.8" r="1.27"/><circle cx="230.9" cy="363.3" r="1.00"/><circle cx="250.4" cy="380.2" r="0.72"/><circle cx="234.6" cy="365.7" r="0.86"/><circle cx="246.8" cy="387.6" r="1.20"/><circle cx="232.7" cy="356.8" r="1.07"/><circle cx="248.8" cy="383.1" r="0.97"/><circle cx="229.0" cy="359.1" r="1.24"/><circle cx="243.8" cy="384.3" r="1.28"/><circle cx="237.2" cy="363.4" r="0.62"/><circle cx="238.4" cy="375.0" r="1.25"/><circle cx="243.3" cy="379.9" r="1.11"/><circle cx="238.1" cy="372.3" r="0.53"/><circle cx="248.4" cy="378.2" r="1.24"/><circle cx="244.6" cy="375.2" r="0.60"/><circle cx="232.6" cy="367.6" r="1.06"/><circle cx="234.4" cy="359.5" r="0.92"/><circle cx="242.4" cy="374.3" r="0.68"/><circle cx="246.2" cy="371.7" r="0.74"/><circle cx="234.5" cy="375.6" r="1.02"/><circle cx="248.5" cy="382.8" r="0.69"/><circle cx="255.1" cy="371.8" r="0.82"/><circle cx="259.6" cy="368.3" r="0.70"/><circle cx="262.4" cy="374.1" r="0.55"/><circle cx="260.3" cy="376.2" r="0.54"/><circle cx="255.1" cy="366.7" r="0.65"/><circle cx="263.4" cy="373.2" r="0.88"/><circle cx="262.8" cy="375.2" r="0.52"/><circle cx="266.4" cy="376.8" r="0.89"/><circle cx="257.9" cy="368.3" r="0.86"/><circle cx="255.7" cy="372.2" r="0.70"/><circle cx="257.4" cy="367.8" r="0.65"/><circle cx="260.2" cy="376.3" r="0.49"/><circle cx="259.9" cy="370.1" r="0.98"/><circle cx="257.5" cy="366.6" r="0.44"/><circle cx="287.0" cy="373.2" r="0.93"/><circle cx="291.4" cy="377.4" r="0.96"/><circle cx="288.8" cy="369.1" r="0.96"/><circle cx="295.2" cy="373.0" r="0.80"/><circle cx="288.8" cy="370.6" r="0.60"/><circle cx="287.2" cy="366.5" r="0.57"/><circle cx="286.2" cy="373.0" r="0.47"/><circle cx="297.6" cy="376.2" r="0.61"/><circle cx="293.3" cy="377.6" r="0.66"/><circle cx="283.8" cy="367.4" r="0.62"/><circle cx="297.0" cy="375.7" r="0.62"/><circle cx="297.3" cy="374.7" r="0.65"/><circle cx="293.4" cy="377.2" r="0.42"/><circle cx="285.1" cy="365.3" r="0.95"/><circle cx="320.4" cy="378.6" r="1.03"/><circle cx="324.4" cy="376.5" r="1.07"/><circle cx="331.4" cy="380.6" r="0.90"/><circle cx="323.8" cy="376.2" r="0.40"/><circle cx="332.2" cy="387.2" r="0.84"/><circle cx="340.5" cy="383.9" r="0.56"/><circle cx="325.0" cy="383.3" r="1.07"/><circle cx="325.7" cy="377.1" r="0.70"/><circle cx="325.6" cy="383.3" r="0.53"/><circle cx="334.1" cy="386.7" r="0.98"/><circle cx="333.9" cy="385.3" r="0.63"/><circle cx="323.6" cy="376.8" r="0.95"/><circle cx="318.2" cy="372.1" r="0.93"/><circle cx="323.0" cy="373.7" r="0.42"/><circle cx="329.5" cy="380.1" r="1.09"/><circle cx="335.1" cy="389.6" r="0.59"/><circle cx="318.8" cy="371.5" r="0.75"/><circle cx="333.0" cy="383.3" r="0.56"/><circle cx="324.9" cy="380.1" r="0.87"/><circle cx="332.3" cy="386.6" r="0.87"/><circle cx="316.6" cy="377.2" r="0.61"/><circle cx="329.7" cy="380.6" r="0.92"/><circle cx="321.0" cy="374.3" r="0.57"/><circle cx="317.3" cy="377.9" r="0.80"/><circle cx="323.6" cy="377.2" r="1.09"/><circle cx="333.6" cy="404.8" r="0.89"/><circle cx="330.4" cy="410.4" r="0.46"/><circle cx="329.9" cy="404.7" r="0.90"/><circle cx="338.0" cy="416.7" r="0.58"/><circle cx="330.8" cy="393.1" r="0.98"/><circle cx="330.2" cy="408.2" r="0.62"/><circle cx="335.2" cy="415.9" r="0.56"/><circle cx="331.6" cy="414.0" r="0.46"/><circle cx="332.1" cy="408.1" r="0.53"/><circle cx="333.0" cy="400.5" r="0.52"/><circle cx="329.5" cy="397.8" r="0.79"/><circle cx="332.5" cy="395.3" r="0.60"/><circle cx="335.3" cy="409.9" r="0.59"/><circle cx="327.9" cy="396.6" r="0.73"/><circle cx="330.8" cy="391.3" r="0.64"/><circle cx="331.6" cy="406.7" r="0.45"/><circle cx="328.2" cy="395.2" r="0.65"/><circle cx="331.4" cy="398.2" r="0.97"/><circle cx="330.1" cy="399.5" r="0.61"/><circle cx="329.2" cy="403.1" r="1.00"/><circle cx="377.5" cy="105.0" r="0.84"/><circle cx="373.5" cy="101.1" r="0.94"/><circle cx="377.3" cy="109.3" r="0.64"/><circle cx="391.7" cy="115.7" r="0.50"/><circle cx="366.3" cy="100.5" r="0.78"/><circle cx="393.7" cy="114.3" r="0.77"/><circle cx="376.7" cy="106.7" r="0.49"/><circle cx="374.1" cy="105.2" r="0.96"/><circle cx="369.2" cy="101.9" r="0.88"/><circle cx="395.0" cy="115.9" r="0.48"/><circle cx="391.8" cy="119.4" r="0.69"/><circle cx="366.2" cy="103.1" r="0.63"/><circle cx="391.8" cy="116.9" r="0.89"/><circle cx="369.7" cy="104.3" r="0.53"/><circle cx="376.6" cy="109.0" r="0.90"/><circle cx="372.2" cy="101.9" r="0.64"/><circle cx="381.4" cy="108.7" r="0.47"/><circle cx="372.5" cy="105.6" r="0.94"/><circle cx="367.0" cy="101.1" r="0.85"/><circle cx="366.0" cy="102.4" r="0.47"/><circle cx="383.2" cy="111.0" r="0.78"/><circle cx="375.1" cy="105.1" r="0.75"/><circle cx="377.8" cy="108.5" r="0.67"/><circle cx="380.2" cy="105.5" r="0.77"/><circle cx="381.0" cy="107.5" r="0.86"/><circle cx="364.6" cy="144.4" r="1"/><circle cx="483.4" cy="124.4" r="0.8"/><circle cx="479" cy="137.8" r="1"/><circle cx="467.2" cy="180.3" r="0.64"/><circle cx="455.4" cy="175.7" r="0.60"/><circle cx="453.7" cy="175.4" r="0.85"/><circle cx="457.0" cy="175.4" r="1.01"/><circle cx="439.0" cy="178.3" r="1.12"/><circle cx="457.0" cy="175.5" r="0.90"/><circle cx="450.6" cy="181.8" r="0.61"/><circle cx="469.7" cy="185.1" r="1.09"/><circle cx="469.0" cy="178.5" r="1.29"/><circle cx="455.1" cy="182.6" r="1.23"/><circle cx="442.3" cy="179.3" r="1.24"/><circle cx="438.8" cy="175.2" r="1.10"/><circle cx="441.9" cy="180.1" r="0.72"/><circle cx="469.0" cy="178.1" r="0.90"/><circle cx="473.1" cy="179.2" r="0.71"/><circle cx="456.5" cy="177.6" r="0.53"/><circle cx="443.7" cy="174.4" r="1.25"/><circle cx="462.7" cy="183.2" r="0.63"/><circle cx="467.9" cy="177.7" r="0.92"/><circle cx="461.6" cy="178.7" r="1.20"/><circle cx="458.1" cy="180.0" r="1.21"/><circle cx="439.6" cy="180.5" r="1.00"/><circle cx="451.4" cy="180.7" r="0.71"/><circle cx="475.5" cy="182.6" r="0.79"/><circle cx="466.7" cy="180.1" r="0.64"/><circle cx="466.3" cy="176.9" r="1.16"/><circle cx="446.0" cy="178.6" r="1.29"/><circle cx="459.2" cy="180.8" r="0.75"/><circle cx="436.6" cy="172.3" r="0.62"/><circle cx="460.7" cy="179.2" r="0.91"/><circle cx="472.3" cy="178.5" r="0.68"/><circle cx="462.7" cy="176.1" r="0.50"/><circle cx="450.7" cy="175.0" r="0.79"/><circle cx="444.9" cy="178.0" r="0.97"/><circle cx="444.0" cy="178.2" r="0.88"/><circle cx="438.3" cy="191.6" r="0.69"/><circle cx="441.0" cy="183.6" r="1.01"/><circle cx="468.2" cy="197.5" r="0.82"/><circle cx="445.8" cy="183.9" r="1.02"/><circle cx="456.9" cy="190.2" r="1.02"/><circle cx="450.7" cy="194.7" r="1.09"/><circle cx="443.0" cy="192.4" r="0.54"/><circle cx="455.5" cy="190.4" r="0.69"/><circle cx="435.7" cy="189.3" r="0.51"/><circle cx="455.0" cy="195.8" r="0.61"/><circle cx="441.7" cy="189.0" r="0.91"/><circle cx="458.9" cy="195.5" r="0.64"/><circle cx="446.9" cy="187.2" r="0.54"/><circle cx="468.9" cy="197.6" r="1.07"/><circle cx="433.4" cy="189.4" r="1.10"/><circle cx="452.0" cy="193.0" r="0.86"/><circle cx="444.0" cy="184.4" r="0.69"/><circle cx="436.0" cy="184.8" r="1.10"/><circle cx="461.0" cy="196.3" r="1.07"/><circle cx="444.5" cy="189.2" r="0.85"/><circle cx="465.5" cy="194.1" r="0.71"/><circle cx="458.6" cy="196.9" r="0.67"/><circle cx="470.4" cy="190.1" r="0.71"/><circle cx="442.9" cy="190.7" r="1.26"/><circle cx="464.3" cy="191.8" r="1.20"/><circle cx="447.8" cy="186.8" r="1.23"/><circle cx="458.8" cy="194.2" r="1.03"/><circle cx="473.2" cy="195.5" r="1.17"/><circle cx="461.0" cy="196.4" r="0.85"/><circle cx="462.8" cy="193.9" r="0.75"/><circle cx="442.2" cy="189.3" r="0.56"/><circle cx="471.3" cy="191.7" r="0.52"/><circle cx="437.2" cy="191.2" r="0.78"/><circle cx="440.8" cy="182.8" r="0.53"/><circle cx="461.4" cy="194.2" r="1.06"/><circle cx="464.5" cy="189.2" r="0.97"/><circle cx="447.8" cy="192.7" r="1.16"/><circle cx="470.7" cy="190.7" r="1.19"/><circle cx="469.5" cy="199.5" r="0.59"/><circle cx="443.2" cy="184.3" r="0.53"/><circle cx="395" cy="208" r="0.8"/><circle cx="364" cy="171" r="0.8"/><circle cx="384" cy="169" r="0.7"/><circle cx="460" cy="182" r="0.9"/><circle cx="451" cy="188" r="0.7"/><circle cx="452.8" cy="259.9" r="0.78"/><circle cx="450.7" cy="259.6" r="0.57"/><circle cx="420.7" cy="283.4" r="0.85"/><circle cx="426.1" cy="281.0" r="0.65"/><circle cx="419.0" cy="287.5" r="0.57"/><circle cx="444.8" cy="261.9" r="0.59"/><circle cx="454.7" cy="253.4" r="0.91"/><circle cx="438.9" cy="263.3" r="0.65"/><circle cx="437.7" cy="275.3" r="0.61"/><circle cx="445.6" cy="263.5" r="0.53"/><circle cx="448.1" cy="254.4" r="0.89"/><circle cx="422.5" cy="280.1" r="0.52"/><circle cx="450.9" cy="264.3" r="0.40"/><circle cx="437.6" cy="271.3" r="0.88"/><circle cx="426.6" cy="283.0" r="0.61"/><circle cx="448.2" cy="256.7" r="0.97"/><circle cx="428.1" cy="277.3" r="0.82"/><circle cx="435.1" cy="268.4" r="0.78"/><circle cx="425.0" cy="288.9" r="0.82"/><circle cx="449.3" cy="261.0" r="0.61"/><circle cx="455.7" cy="237.8" r="1.2"/><circle cx="485.7" cy="325.6" r="3"/><circle cx="439" cy="313" r="1.2"/><circle cx="347.0" cy="325.1" r="0.93"/><circle cx="339.3" cy="323.1" r="0.42"/><circle cx="343.8" cy="321.7" r="0.94"/><circle cx="349.0" cy="326.4" r="0.93"/><circle cx="343.6" cy="323.1" r="0.72"/><circle cx="352.4" cy="331.8" r="0.79"/><circle cx="346.2" cy="324.0" r="0.49"/><circle cx="354.4" cy="332.6" r="0.85"/><circle cx="342.4" cy="322.1" r="0.86"/><circle cx="351.3" cy="326.3" r="0.68"/><circle cx="356.8" cy="331.1" r="0.51"/><circle cx="344.0" cy="325.2" r="0.91"/><circle cx="343.2" cy="320.5" r="0.55"/><circle cx="345.1" cy="324.7" r="0.50"/><circle cx="433" cy="324" r="1.8"/><circle cx="436" cy="329" r="1.5"/><circle cx="431" cy="333" r="2.0"/><circle cx="428" cy="339" r="1.6"/><circle cx="430" cy="344" r="1.4"/><circle cx="425" cy="346" r="2.2"/><circle cx="424" cy="352" r="1.6"/><circle cx="420" cy="356" r="1.8"/><circle cx="410" cy="360" r="2.4"/><circle cx="406" cy="366" r="2.6"/><circle cx="413" cy="368" r="2.4"/><circle cx="419" cy="364" r="1.8"/><circle cx="404" cy="371" r="1.8"/><circle cx="413.2" cy="354.5" r="1.18"/><circle cx="425.6" cy="361.9" r="1.17"/><circle cx="405.6" cy="351.3" r="1.19"/><circle cx="424.8" cy="367.5" r="0.75"/><circle cx="407.3" cy="354.8" r="0.49"/><circle cx="408.7" cy="353.4" r="0.43"/><circle cx="412.7" cy="359.9" r="0.95"/><circle cx="416.4" cy="360.9" r="0.77"/><circle cx="405.8" cy="353.5" r="0.72"/><circle cx="422.4" cy="367.5" r="0.74"/><circle cx="418.1" cy="363.1" r="0.74"/><circle cx="407.9" cy="356.1" r="1.10"/><circle cx="424.3" cy="366.8" r="1.08"/><circle cx="421.8" cy="364.5" r="0.76"/><circle cx="410.8" cy="357.1" r="0.48"/><circle cx="413.3" cy="360.3" r="0.97"/><circle cx="422.0" cy="360.9" r="0.74"/><circle cx="415.1" cy="359.9" r="0.73"/><circle cx="420.3" cy="366.4" r="0.55"/><circle cx="420.4" cy="364.9" r="0.71"/><circle cx="414.6" cy="363.0" r="0.43"/><circle cx="419.8" cy="358.6" r="1.03"/><circle cx="430.1" cy="368.9" r="0.48"/><circle cx="419.1" cy="361.8" r="0.97"/><circle cx="416.7" cy="361.2" r="1.06"/><circle cx="418.0" cy="359.8" r="1.16"/><circle cx="407.5" cy="355.4" r="0.71"/><circle cx="426.6" cy="362.7" r="1.19"/><circle cx="414.6" cy="354.2" r="0.62"/><circle cx="416.2" cy="354.8" r="0.73"/><circle cx="420.6" cy="387.6" r="1.5"/><circle cx="399" cy="419" r="2.5"/><circle cx="472" cy="377" r="2.8"/><circle cx="477" cy="374" r="2.4"/><circle cx="480" cy="371.5" r="1.8"/><circle cx="474" cy="381" r="1.6"/><circle cx="470" cy="373" r="1.2"/><circle cx="465.6" cy="397.3" r="0.68"/><circle cx="465.9" cy="390.4" r="0.99"/><circle cx="476.7" cy="413.2" r="0.58"/><circle cx="475.0" cy="408.2" r="0.57"/><circle cx="459.6" cy="388.3" r="1.05"/><circle cx="471.3" cy="403.2" r="0.85"/><circle cx="460.1" cy="392.1" r="0.68"/><circle cx="468.9" cy="404.7" r="1.05"/><circle cx="469.3" cy="397.1" r="0.84"/><circle cx="459.1" cy="388.4" r="0.68"/><circle cx="476.8" cy="409.3" r="0.70"/><circle cx="464.3" cy="390.8" r="0.55"/><circle cx="457.5" cy="384.0" r="0.62"/><circle cx="465.0" cy="390.0" r="0.78"/><circle cx="466.2" cy="397.3" r="0.93"/><circle cx="462.9" cy="396.3" r="1.08"/><circle cx="457.8" cy="386.2" r="1.12"/><circle cx="476.4" cy="406.6" r="1.07"/><circle cx="474.4" cy="401.3" r="0.41"/><circle cx="476.0" cy="414.1" r="0.60"/><circle cx="463.4" cy="384.8" r="0.59"/><circle cx="474.8" cy="407.2" r="0.52"/><circle cx="474.2" cy="413.1" r="0.53"/><circle cx="475.2" cy="412.0" r="1.03"/><circle cx="469.0" cy="406.0" r="1.03"/><circle cx="448.1" cy="418.6" r="1.12"/><circle cx="459.2" cy="405.0" r="0.89"/><circle cx="444.8" cy="418.5" r="0.74"/><circle cx="474.3" cy="397.1" r="0.94"/><circle cx="480.6" cy="389.3" r="0.63"/><circle cx="461.9" cy="404.7" r="0.99"/><circle cx="447.8" cy="420.3" r="1.26"/><circle cx="462.6" cy="403.6" r="1.10"/><circle cx="447.3" cy="417.8" r="0.88"/><circle cx="443.3" cy="423.5" r="1.07"/><circle cx="457.5" cy="412.1" r="1.05"/><circle cx="452.0" cy="409.6" r="0.80"/><circle cx="440.7" cy="422.3" r="0.94"/><circle cx="446.2" cy="421.5" r="1.15"/><circle cx="456.7" cy="410.3" r="1.28"/><circle cx="467.4" cy="400.3" r="0.97"/><circle cx="451.0" cy="416.1" r="0.89"/><circle cx="464.6" cy="402.0" r="1.24"/><circle cx="469.1" cy="396.0" r="0.86"/><circle cx="462.2" cy="406.2" r="0.96"/><circle cx="440.5" cy="421.4" r="1.21"/><circle cx="469.5" cy="399.8" r="0.77"/><circle cx="457.3" cy="407.5" r="1.21"/><circle cx="480.4" cy="387.4" r="1.30"/><circle cx="461.3" cy="408.7" r="0.77"/><circle cx="483.9" cy="388.7" r="1.33"/><circle cx="456.2" cy="408.2" r="1.21"/><circle cx="443.4" cy="419.2" r="1.06"/><circle cx="455.3" cy="408.7" r="1.04"/><circle cx="454.8" cy="412.8" r="1.10"/><circle cx="462.3" cy="402.3" r="0.59"/><circle cx="477.0" cy="395.7" r="1.20"/><circle cx="443.1" cy="419.2" r="0.83"/><circle cx="446.5" cy="415.3" r="1.01"/><circle cx="472.7" cy="397.2" r="0.88"/><circle cx="469.6" cy="398.8" r="1.08"/><circle cx="444.6" cy="422.7" r="1.01"/><circle cx="482.8" cy="390.2" r="1.23"/><circle cx="456.6" cy="405.8" r="0.90"/><circle cx="482.8" cy="388.0" r="1.03"/><circle cx="440.8" cy="418.5" r="0.93"/><circle cx="466.8" cy="403.7" r="1.08"/><circle cx="475.2" cy="396.2" r="0.51"/><circle cx="482.1" cy="386.3" r="0.61"/><circle cx="443.0" cy="423.7" r="1.28"/><circle cx="483.5" cy="324.7" r="2"/><circle cx="562.3" cy="97.8" r="1"/><circle cx="486" cy="76" r="0.6"/><circle cx="494" cy="86" r="0.6"/><circle cx="489" cy="129" r="0.8"/><circle cx="491" cy="135" r="0.8"/><circle cx="510.1" cy="206.2" r="4"/><circle cx="512" cy="241" r="1.1"/><circle cx="486.8" cy="325.6" r="3.5"/><circle cx="561.2" cy="361.1" r="0.8"/><circle cx="229" cy="63" r="0.5"/><circle cx="310" cy="110" r="0.6"/><circle cx="330" cy="100" r="0.5"/><circle cx="183" cy="330" r="0.5"/><circle cx="262" cy="132" r="0.6"/><circle cx="356" cy="302" r="0.7"/><circle cx="357" cy="282" r="0.6"/><circle cx="600" cy="230" r="0.6"/><circle cx="563" cy="262" r="0.8"/><circle cx="575" cy="310" r="0.7"/><circle cx="420" cy="345" r="0.8"/><circle cx="148.9" cy="68.2" r="0.71"/><circle cx="146.8" cy="73.5" r="0.44"/><circle cx="145.0" cy="65.6" r="0.71"/><circle cx="152.2" cy="98.7" r="0.39"/><circle cx="150.3" cy="89.3" r="0.58"/><circle cx="155.0" cy="101.4" r="0.83"/><circle cx="154.1" cy="92.3" r="0.36"/><circle cx="150.1" cy="90.3" r="0.39"/><circle cx="147.5" cy="76.3" r="0.43"/><circle cx="153.3" cy="98.7" r="0.38"/><circle cx="155.1" cy="109.5" r="0.57"/><circle cx="157.7" cy="113.3" r="0.75"/><circle cx="154.8" cy="109.5" r="0.66"/><circle cx="138.4" cy="108.8" r="0.74"/><circle cx="137.2" cy="126.2" r="0.63"/><circle cx="139.7" cy="104.6" r="0.84"/><circle cx="136.8" cy="118.3" r="0.52"/><circle cx="136.0" cy="115.1" r="0.77"/><circle cx="138.9" cy="114.8" r="0.56"/><circle cx="138.9" cy="124.3" r="0.69"/><circle cx="136.4" cy="114.9" r="0.75"/><circle cx="124.0" cy="175.9" r="0.48"/><circle cx="127.1" cy="182.9" r="0.76"/><circle cx="145.4" cy="198.8" r="0.77"/><circle cx="140.0" cy="198.4" r="0.64"/><circle cx="120.9" cy="178.1" r="0.75"/><circle cx="135.3" cy="193.8" r="0.52"/><circle cx="115.2" cy="170.1" r="0.75"/><circle cx="118.6" cy="175.0" r="0.82"/><circle cx="120.3" cy="175.8" r="0.69"/><circle cx="129.8" cy="183.4" r="0.48"/><circle cx="138.1" cy="195.9" r="0.58"/><circle cx="114.4" cy="170.9" r="0.74"/><circle cx="145.8" cy="241.2" r="0.80"/><circle cx="140.8" cy="267.4" r="0.59"/><circle cx="144.6" cy="255.8" r="0.45"/><circle cx="145.7" cy="239.1" r="0.53"/><circle cx="143.9" cy="254.7" r="0.61"/><circle cx="148.8" cy="238.4" r="0.85"/><circle cx="146.7" cy="247.3" r="0.67"/><circle cx="143.2" cy="263.8" r="0.65"/><circle cx="145.2" cy="245.8" r="0.36"/><circle cx="145.6" cy="232.9" r="0.78"/><circle cx="161.9" cy="247.1" r="0.48"/><circle cx="163.2" cy="256.1" r="0.82"/><circle cx="161.4" cy="255.9" r="0.83"/><circle cx="163.6" cy="239.7" r="0.45"/><circle cx="163.3" cy="237.5" r="0.38"/><circle cx="160.7" cy="249.4" r="0.58"/><circle cx="161.5" cy="261.5" r="0.38"/><circle cx="156.8" cy="268.2" r="0.41"/><circle cx="153.1" cy="271.5" r="0.63"/><circle cx="154.9" cy="266.5" r="0.68"/><circle cx="177.0" cy="258.5" r="0.43"/><circle cx="171.5" cy="275.3" r="0.46"/><circle cx="179.8" cy="248.1" r="0.53"/><circle cx="172.2" cy="273.5" r="0.77"/><circle cx="177.5" cy="247.9" r="0.70"/><circle cx="173.3" cy="265.7" r="0.38"/><circle cx="177.1" cy="250.8" r="0.82"/><circle cx="91.4" cy="306.6" r="0.65"/><circle cx="87.1" cy="310.0" r="0.51"/><circle cx="116.0" cy="293.1" r="0.59"/><circle cx="120.9" cy="289.7" r="0.42"/><circle cx="92.0" cy="307.7" r="0.71"/><circle cx="119.8" cy="291.3" r="0.81"/><circle cx="116.3" cy="288.8" r="0.78"/><circle cx="79.5" cy="314.3" r="0.57"/><circle cx="123.5" cy="284.6" r="0.77"/><circle cx="93.8" cy="304.4" r="0.52"/><circle cx="82.6" cy="310.8" r="0.66"/><circle cx="122.4" cy="288.9" r="0.38"/><circle cx="88.7" cy="306.8" r="0.42"/><circle cx="80.3" cy="313.2" r="0.56"/><circle cx="121.5" cy="289.1" r="0.77"/><circle cx="111.4" cy="295.5" r="0.60"/><circle cx="107.2" cy="301.3" r="0.41"/><circle cx="72.0" cy="322.2" r="0.80"/><circle cx="89.0" cy="313.3" r="0.59"/><circle cx="110.2" cy="303.0" r="0.45"/><circle cx="104.5" cy="302.1" r="0.85"/><circle cx="74.9" cy="320.6" r="0.49"/><circle cx="76.6" cy="320.0" r="0.71"/><circle cx="108.4" cy="300.3" r="0.36"/><circle cx="81.1" cy="316.5" r="0.42"/><circle cx="125.0" cy="293.1" r="0.61"/><circle cx="115.5" cy="299.6" r="0.81"/><circle cx="113.4" cy="299.9" r="0.42"/><circle cx="115.2" cy="298.1" r="0.71"/><circle cx="115.5" cy="301.3" r="0.39"/><circle cx="91.8" cy="310.6" r="0.49"/><circle cx="126.9" cy="319.6" r="0.70"/><circle cx="136.2" cy="314.0" r="0.45"/><circle cx="124.9" cy="321.3" r="0.55"/><circle cx="133.7" cy="312.8" r="0.76"/><circle cx="72.2" cy="359.5" r="0.78"/><circle cx="74.1" cy="355.3" r="0.81"/><circle cx="74.8" cy="359.0" r="0.48"/><circle cx="69.6" cy="360.2" r="0.53"/><circle cx="181.5" cy="398.2" r="0.65"/><circle cx="180.0" cy="397.1" r="0.57"/><circle cx="257.9" cy="102.0" r="0.71"/><circle cx="261.7" cy="107.6" r="0.51"/><circle cx="260.8" cy="104.8" r="0.73"/><circle cx="248.3" cy="100.9" r="0.83"/><circle cx="316.6" cy="65.6" r="0.62"/><circle cx="318.4" cy="63.7" r="0.83"/><circle cx="308.5" cy="62.3" r="0.40"/><circle cx="308.7" cy="65.2" r="0.37"/><circle cx="304.0" cy="63.7" r="0.45"/><circle cx="301.7" cy="62.7" r="0.64"/><circle cx="317.3" cy="66.6" r="0.40"/><circle cx="313.5" cy="128.6" r="0.37"/><circle cx="297.3" cy="121.1" r="0.60"/><circle cx="301.4" cy="120.9" r="0.55"/><circle cx="297.5" cy="121.6" r="0.78"/><circle cx="297.7" cy="121.6" r="0.72"/><circle cx="282.8" cy="174.5" r="0.82"/><circle cx="282.6" cy="185.8" r="0.77"/><circle cx="281.5" cy="192.5" r="0.82"/><circle cx="279.5" cy="204.8" r="0.47"/><circle cx="283.0" cy="183.1" r="0.84"/><circle cx="276.8" cy="205.7" r="0.76"/><circle cx="280.1" cy="208.5" r="0.61"/><circle cx="275.3" cy="213.2" r="0.47"/><circle cx="281.4" cy="187.2" r="0.53"/><circle cx="282.8" cy="193.0" r="0.57"/><circle cx="283.3" cy="191.8" r="0.42"/><circle cx="275.9" cy="213.9" r="0.82"/><circle cx="315.2" cy="180.2" r="0.79"/><circle cx="317.2" cy="188.1" r="0.67"/><circle cx="317.8" cy="169.7" r="0.49"/><circle cx="315.2" cy="177.5" r="0.66"/><circle cx="318.6" cy="169.4" r="0.57"/><circle cx="315.8" cy="189.9" r="0.50"/><circle cx="318.1" cy="181.2" r="0.65"/><circle cx="341.4" cy="211.0" r="0.48"/><circle cx="344.0" cy="186.0" r="0.42"/><circle cx="347.7" cy="168.7" r="0.50"/><circle cx="345.4" cy="183.1" r="0.47"/><circle cx="346.1" cy="166.7" r="0.77"/><circle cx="343.1" cy="193.3" r="0.68"/><circle cx="344.8" cy="172.4" r="0.58"/><circle cx="343.2" cy="190.2" r="0.58"/><circle cx="346.2" cy="178.2" r="0.46"/><circle cx="344.4" cy="188.4" r="0.64"/><circle cx="347.4" cy="162.9" r="0.78"/><circle cx="345.2" cy="174.4" r="0.60"/><circle cx="262.7" cy="265.1" r="0.50"/><circle cx="253.2" cy="308.5" r="0.38"/><circle cx="249.4" cy="316.7" r="0.38"/><circle cx="262.2" cy="274.7" r="0.72"/><circle cx="270.6" cy="250.8" r="0.83"/><circle cx="254.1" cy="305.6" r="0.52"/><circle cx="262.2" cy="271.4" r="0.66"/><circle cx="248.3" cy="314.4" r="0.61"/><circle cx="251.6" cy="304.8" r="0.73"/><circle cx="258.5" cy="281.9" r="0.70"/><circle cx="249.5" cy="320.9" r="0.79"/><circle cx="271.1" cy="241.0" r="0.64"/><circle cx="257.1" cy="283.6" r="0.64"/><circle cx="260.0" cy="276.9" r="0.79"/><circle cx="256.7" cy="293.9" r="0.58"/><circle cx="259.2" cy="280.5" r="0.50"/><circle cx="261.7" cy="274.8" r="0.54"/><circle cx="262.5" cy="268.6" r="0.77"/><circle cx="259.2" cy="284.4" r="0.44"/><circle cx="265.7" cy="267.8" r="0.64"/><circle cx="258.6" cy="292.0" r="0.81"/><circle cx="262.2" cy="268.7" r="0.77"/><circle cx="313.3" cy="283.9" r="0.56"/><circle cx="311.5" cy="282.6" r="0.37"/><circle cx="297.2" cy="281.2" r="0.81"/><circle cx="305.5" cy="283.5" r="0.85"/><circle cx="295.3" cy="280.8" r="0.69"/><circle cx="290.3" cy="278.9" r="0.65"/><circle cx="288.2" cy="281.0" r="0.69"/><circle cx="296.0" cy="279.1" r="0.54"/><circle cx="290.6" cy="279.9" r="0.64"/><circle cx="309.3" cy="286.4" r="0.59"/><circle cx="321.9" cy="254.4" r="0.85"/><circle cx="323.2" cy="249.1" r="0.76"/><circle cx="325.9" cy="239.6" r="0.84"/><circle cx="318.5" cy="275.9" r="0.41"/><circle cx="317.0" cy="279.6" r="0.76"/><circle cx="315.2" cy="284.8" r="0.56"/><circle cx="326.1" cy="238.9" r="0.61"/><circle cx="323.1" cy="258.3" r="0.44"/><circle cx="320.1" cy="265.0" r="0.53"/><circle cx="316.3" cy="285.1" r="0.37"/><circle cx="321.4" cy="252.7" r="0.50"/><circle cx="322.0" cy="268.8" r="0.50"/><circle cx="318.0" cy="276.8" r="0.68"/><circle cx="324.8" cy="240.9" r="0.63"/><circle cx="336.7" cy="244.7" r="0.62"/><circle cx="329.7" cy="285.4" r="0.56"/><circle cx="340.3" cy="237.0" r="0.73"/><circle cx="340.7" cy="236.2" r="0.44"/><circle cx="333.4" cy="258.8" r="0.66"/><circle cx="333.8" cy="275.2" r="0.36"/><circle cx="333.1" cy="273.0" r="0.71"/><circle cx="337.9" cy="249.9" r="0.48"/><circle cx="337.3" cy="235.2" r="0.64"/><circle cx="336.7" cy="249.4" r="0.54"/><circle cx="337.8" cy="232.7" r="0.64"/><circle cx="330.7" cy="283.4" r="0.66"/><circle cx="339.5" cy="244.2" r="0.82"/><circle cx="332.3" cy="277.7" r="0.80"/><circle cx="307.8" cy="272.5" r="0.65"/><circle cx="306.0" cy="279.1" r="0.82"/><circle cx="311.2" cy="245.8" r="0.71"/><circle cx="311.7" cy="244.8" r="0.79"/><circle cx="307.8" cy="256.8" r="0.47"/><circle cx="311.8" cy="242.6" r="0.44"/><circle cx="306.8" cy="279.8" r="0.63"/><circle cx="311.4" cy="239.7" r="0.54"/><circle cx="311.5" cy="253.5" r="0.41"/><circle cx="307.5" cy="273.0" r="0.47"/><circle cx="312.0" cy="243.4" r="0.47"/><circle cx="293.2" cy="297.6" r="0.52"/><circle cx="297.0" cy="298.6" r="0.40"/><circle cx="300.4" cy="299.9" r="0.41"/><circle cx="305.8" cy="301.1" r="0.75"/><circle cx="297.4" cy="297.1" r="0.71"/><circle cx="303.6" cy="301.2" r="0.45"/><circle cx="321.9" cy="303.0" r="0.46"/><circle cx="300.8" cy="310.0" r="0.70"/><circle cx="298.3" cy="304.0" r="0.64"/><circle cx="300.7" cy="307.5" r="0.65"/><circle cx="298.6" cy="302.6" r="0.41"/><circle cx="298.8" cy="311.5" r="0.49"/><circle cx="298.3" cy="319.1" r="0.68"/><circle cx="299.5" cy="313.2" r="0.54"/><circle cx="326.5" cy="297.2" r="0.78"/><circle cx="322.9" cy="303.5" r="0.40"/><circle cx="322.5" cy="310.8" r="0.60"/><circle cx="325.6" cy="303.4" r="0.51"/><circle cx="325.8" cy="301.3" r="0.71"/><circle cx="324.2" cy="302.7" r="0.80"/><circle cx="318.9" cy="316.4" r="0.78"/><circle cx="293.5" cy="311.8" r="0.36"/><circle cx="306.6" cy="316.0" r="0.53"/><circle cx="300.1" cy="314.7" r="0.70"/><circle cx="295.9" cy="314.8" r="0.53"/><circle cx="305.8" cy="313.7" r="0.41"/><circle cx="312.3" cy="317.3" r="0.71"/><circle cx="293.3" cy="368.3" r="0.43"/><circle cx="295.5" cy="370.2" r="0.54"/><circle cx="292.9" cy="369.4" r="0.67"/><circle cx="294.6" cy="372.3" r="0.64"/><circle cx="332.9" cy="382.7" r="0.57"/><circle cx="331.9" cy="382.6" r="0.35"/><circle cx="334.4" cy="386.3" r="0.49"/><circle cx="315.8" cy="375.5" r="0.65"/><circle cx="317.3" cy="373.3" r="0.41"/><circle cx="334.7" cy="383.6" r="0.81"/><circle cx="334.8" cy="410.7" r="0.70"/><circle cx="330.3" cy="401.2" r="0.76"/><circle cx="332.6" cy="397.6" r="0.82"/><circle cx="329.6" cy="402.2" r="0.70"/><circle cx="331.5" cy="410.9" r="0.66"/><circle cx="333.6" cy="402.4" r="0.70"/><circle cx="331.5" cy="402.0" r="0.81"/><circle cx="282.1" cy="402.9" r="0.37"/><circle cx="394.0" cy="97.9" r="0.48"/><circle cx="394.8" cy="89.7" r="0.67"/><circle cx="397.9" cy="90.2" r="0.38"/><circle cx="399.1" cy="80.6" r="0.45"/><circle cx="400.8" cy="78.4" r="0.70"/><circle cx="396.7" cy="96.7" r="0.47"/><circle cx="397.4" cy="88.6" r="0.82"/><circle cx="399.7" cy="80.3" r="0.79"/><circle cx="400.6" cy="69.4" r="0.52"/><circle cx="393.9" cy="103.8" r="0.73"/><circle cx="399.9" cy="70.7" r="0.65"/><circle cx="396.5" cy="85.5" r="0.77"/><circle cx="402.1" cy="68.2" r="0.53"/><circle cx="420.9" cy="128.3" r="0.49"/><circle cx="419.6" cy="130.8" r="0.57"/><circle cx="415.9" cy="127.8" r="0.58"/><circle cx="428.6" cy="131.3" r="0.39"/><circle cx="409.9" cy="128.9" r="0.73"/><circle cx="413.9" cy="129.0" r="0.84"/><circle cx="438.7" cy="134.4" r="0.59"/><circle cx="432.1" cy="132.6" r="0.62"/><circle cx="409.8" cy="128.6" r="0.67"/><circle cx="440.8" cy="138.9" r="0.68"/><circle cx="422.9" cy="129.8" r="0.42"/><circle cx="411.0" cy="128.3" r="0.77"/><circle cx="425.3" cy="130.3" r="0.67"/><circle cx="357.9" cy="136.8" r="0.43"/><circle cx="358.9" cy="136.3" r="0.72"/><circle cx="365.7" cy="131.9" r="0.76"/><circle cx="365.2" cy="131.3" r="0.63"/><circle cx="385.9" cy="119.5" r="0.47"/><circle cx="380.6" cy="117.4" r="0.66"/><circle cx="393.6" cy="120.3" r="0.80"/><circle cx="395.9" cy="119.8" r="0.60"/><circle cx="397.4" cy="121.5" r="0.64"/><circle cx="395.8" cy="120.5" r="0.43"/><circle cx="389.1" cy="125.1" r="0.39"/><circle cx="394.4" cy="128.2" r="0.45"/><circle cx="384.6" cy="128.7" r="0.77"/><circle cx="347.4" cy="206.6" r="0.56"/><circle cx="350.5" cy="181.7" r="0.61"/><circle cx="351.3" cy="187.9" r="0.57"/><circle cx="348.1" cy="198.3" r="0.80"/><circle cx="352.7" cy="176.7" r="0.57"/><circle cx="350.6" cy="194.1" r="0.45"/><circle cx="352.9" cy="173.3" r="0.58"/><circle cx="346.3" cy="211.6" r="0.78"/><circle cx="346.1" cy="211.7" r="0.66"/><circle cx="350.8" cy="205.0" r="0.69"/><circle cx="473.2" cy="193.5" r="0.64"/><circle cx="472.4" cy="201.2" r="0.67"/><circle cx="473.0" cy="186.6" r="0.79"/><circle cx="473.7" cy="180.6" r="0.69"/><circle cx="474.1" cy="189.9" r="0.68"/><circle cx="447.7" cy="221.6" r="0.56"/><circle cx="444.9" cy="226.2" r="0.55"/><circle cx="453.8" cy="215.0" r="0.79"/><circle cx="446.3" cy="227.8" r="0.78"/><circle cx="451.6" cy="219.3" r="0.62"/><circle cx="450.2" cy="218.3" r="0.63"/><circle cx="450.3" cy="217.4" r="0.41"/><circle cx="445.1" cy="225.7" r="0.39"/><circle cx="400.9" cy="246.8" r="0.57"/><circle cx="392.0" cy="255.7" r="0.71"/><circle cx="395.3" cy="254.5" r="0.85"/><circle cx="395.9" cy="253.7" r="0.77"/><circle cx="400.8" cy="246.2" r="0.83"/><circle cx="395.9" cy="248.5" r="0.42"/><circle cx="351.4" cy="311.6" r="0.47"/><circle cx="350.8" cy="307.0" r="0.65"/><circle cx="475.1" cy="395.7" r="0.70"/><circle cx="464.6" cy="401.2" r="0.66"/><circle cx="446.8" cy="417.9" r="0.81"/><circle cx="448.0" cy="419.2" r="0.72"/><circle cx="468.5" cy="398.7" r="0.69"/><circle cx="450.0" cy="417.8" r="0.54"/><circle cx="451.3" cy="411.9" r="0.71"/><circle cx="481.4" cy="388.8" r="0.40"/><circle cx="459.6" cy="405.8" r="0.41"/><circle cx="444.2" cy="419.4" r="0.48"/><circle cx="475.6" cy="394.5" r="0.77"/><circle cx="460.2" cy="409.3" r="0.36"/><circle cx="478.0" cy="390.4" r="0.44"/><circle cx="532.2" cy="91.7" r="0.69"/><circle cx="526.1" cy="89.9" r="0.79"/><circle cx="531.3" cy="93.3" r="0.75"/><circle cx="546.5" cy="93.2" r="0.52"/><circle cx="517.7" cy="89.9" r="0.79"/><circle cx="541.2" cy="92.3" r="0.44"/><circle cx="541.3" cy="95.2" r="0.55"/><circle cx="529.5" cy="90.6" r="0.77"/><circle cx="526.0" cy="93.1" r="0.66"/><circle cx="504.5" cy="106.1" r="0.46"/><circle cx="515.3" cy="109.1" r="0.37"/><circle cx="505.8" cy="106.5" r="0.58"/><circle cx="507.5" cy="107.2" r="0.53"/><circle cx="493.1" cy="106.4" r="0.52"/><circle cx="493.5" cy="105.9" r="0.84"/><circle cx="494.3" cy="104.6" r="0.69"/><circle cx="499.9" cy="105.8" r="0.60"/><circle cx="499.5" cy="107.1" r="0.61"/><circle cx="536.3" cy="146.0" r="0.37"/><circle cx="516.3" cy="140.7" r="0.79"/><circle cx="527.3" cy="142.5" r="0.67"/><circle cx="506.6" cy="136.4" r="0.75"/><circle cx="532.1" cy="144.9" r="0.69"/><circle cx="503.2" cy="137.8" r="0.72"/><circle cx="513.8" cy="139.5" r="0.53"/><circle cx="516.1" cy="139.0" r="0.38"/><circle cx="505.3" cy="136.3" r="0.84"/><circle cx="512.6" cy="138.1" r="0.47"/><circle cx="500.0" cy="135.3" r="0.42"/><circle cx="487.9" cy="135.0" r="0.58"/><circle cx="510.6" cy="138.5" r="0.50"/><circle cx="485.6" cy="81.5" r="0.50"/><circle cx="589.8" cy="221.2" r="0.63"/><circle cx="599.3" cy="222.4" r="0.81"/><circle cx="594.6" cy="219.7" r="0.44"/><circle cx="568.3" cy="253.2" r="0.53"/><circle cx="570.1" cy="257.1" r="0.78"/><circle cx="572.1" cy="244.5" r="0.80"/><circle cx="572.4" cy="248.4" r="0.36"/><circle cx="507.2" cy="285.3" r="0.70"/><circle cx="506.5" cy="286.2" r="0.45"/><circle cx="503.2" cy="292.6" r="0.67"/><circle cx="505.1" cy="285.5" r="0.83"/><circle cx="509.6" cy="266.4" r="0.75"/><circle cx="507.9" cy="268.9" r="0.42"/><circle cx="506.3" cy="298.1" r="0.79"/><circle cx="501.2" cy="306.5" r="0.46"/><circle cx="504.3" cy="300.5" r="0.67"/><circle cx="504.0" cy="302.2" r="0.52"/><circle cx="507.8" cy="295.7" r="0.37"/><circle cx="490.3" cy="359.1" r="0.60"/><circle cx="490.7" cy="358.7" r="0.58"/><circle cx="490.4" cy="347.6" r="0.63"/><circle cx="489.9" cy="365.8" r="0.66"/><circle cx="552.6" cy="298.2" r="0.40"/><circle cx="537.1" cy="293.0" r="0.73"/><circle cx="534.4" cy="295.3" r="0.56"/><circle cx="547.2" cy="297.9" r="0.63"/><circle cx="550.5" cy="298.9" r="0.52"/><circle cx="553.2" cy="298.1" r="0.71"/><circle cx="553.2" cy="300.4" r="0.50"/><circle cx="550.3" cy="338.5" r="0.58"/><circle cx="557.2" cy="314.7" r="0.82"/><circle cx="560.9" cy="308.0" r="0.59"/><circle cx="552.4" cy="332.9" r="0.53"/><circle cx="551.4" cy="349.7" r="0.73"/><circle cx="561.2" cy="305.9" r="0.42"/><circle cx="559.5" cy="304.0" r="0.63"/><circle cx="556.4" cy="309.6" r="0.53"/><circle cx="560.0" cy="308.7" r="0.72"/><circle cx="552.3" cy="346.5" r="0.36"/><circle cx="553.4" cy="339.4" r="0.84"/><circle cx="554.5" cy="325.4" r="0.52"/><circle cx="545.9" cy="371.4" r="0.51"/><circle cx="546.8" cy="374.5" r="0.72"/><circle cx="549.1" cy="351.6" r="0.55"/><circle cx="547.2" cy="373.5" r="0.63"/><circle cx="546.0" cy="360.6" r="0.82"/><circle cx="547.8" cy="367.0" r="0.48"/><circle cx="523.8" cy="374.2" r="0.47"/><circle cx="522.0" cy="375.3" r="0.67"/><circle cx="524.4" cy="376.8" r="0.46"/><circle cx="532.2" cy="374.4" r="0.78"/><circle cx="540.1" cy="376.2" r="0.73"/><circle cx="538.8" cy="376.1" r="0.52"/></g></g></svg>

<svg class="a" style="left:0;top:0" width="800" height="450" viewBox="0 0 800 450">
<!-- top bar CJK approx -->
<g stroke="#cfccc6" stroke-width="0.6" fill="none">
<path d="M5.5,3.2 L6.3,3.8 M5.2,5 L6,5.6 M5,8.5 L6.3,6.8 M7,4 L10.5,3.4 M8.7,2.8 L8.7,5.5 M7,5.5 L10.7,5.5 M7.5,6.5 L7.5,8.8 L10.3,8.8 L10.3,6.5 Z"/>
<path d="M12,3.8 L14,3.8 M11.8,5.5 L14.2,5.5 M13,5.5 L12,8.6 L14,8 M15,3 L14.6,8.8 M14.3,4.5 L17.3,4.5 L17,8.8 L16.3,8.5"/>
<path d="M395,3.5 L399,3.5 L399,5 L395,5 Z M394.6,6.3 L399.6,6.3 M397,5 L397,8.6 M395,7.5 L399,7.5 M394.6,8.6 L399.6,8.6"/>
<path d="M401,3.5 L403.6,3.5 M401.4,3.3 L401.4,8 M403.2,3.3 L403.2,8 M401,5 L403.6,5 M401,6.5 L403.6,6.5 M400.6,8.4 L401.4,8 M403.2,8 L404,8.6 M404.6,3.5 L406.6,3.5 L406.4,8.6 M404.6,3.5 L404.4,8.6 M404.6,5.2 L406.5,5.2 M404.6,6.8 L406.5,6.8"/>
<path d="M408,3.6 L412.6,3.6 L412.6,8.4 L408,8.4 Z M409.5,3.6 L409,6 M411,3.6 L411,6 L412,6.3 M408,7 L412.6,7"/>
</g>
<!-- krita logo small -->
<circle cx="29.3" cy="5.3" r="3" fill="#e078d8"/><path d="M26.5,6 A3,3 0 0 0 31.5,7.6 Z" fill="#4fd6e8"/><path d="M27.3,3.5 L31,6.6" stroke="#222" stroke-width="0.8"/>
<path d="M51.5,4.5 L55,4.5 L53.25,6.3 Z" fill="#d9d6d0"/>
<!-- top right indicators -->
<rect x="710.8" y="2.3" width="7" height="6.6" rx="0.8" fill="#d0cdc7"/><rect x="712" y="3.4" width="4.6" height="4.2" fill="#8a8780"/>
<text x="728.5" y="8" font-size="5.6" font-family="Liberation Sans" font-weight="bold" fill="#d6d3cd">zh</text>
<path d="M738.6,4.5 L742,4.5 L740.3,6.3 Z" fill="#d9d6d0"/>
<circle cx="758.5" cy="2.8" r="0.7" fill="#cfccc6"/><path d="M756,4.5 L759,4.3 L758.5,6.5 L761,8.6 M758.5,6.5 L756.3,8.6" stroke="#cfccc6" stroke-width="0.8" fill="none"/>
<path d="M767,4.5 L768.7,4.5 L771,2.8 L771,8.6 L768.7,6.9 L767,6.9 Z" fill="#cfccc6"/><path d="M772.4,4 Q773.5,5.7 772.4,7.4" stroke="#cfccc6" stroke-width="0.6" fill="none"/>
<circle cx="782.3" cy="5.8" r="2.8" stroke="#d0cdc7" stroke-width="0.9" fill="none"/><path d="M782.3,2.3 L782.3,5" stroke="#2d2c2a" stroke-width="1.6"/><path d="M782.3,2.6 L782.3,5.3" stroke="#d0cdc7" stroke-width="0.8"/>
<path d="M790.3,4.5 L793.8,4.5 L792,6.3 Z" fill="#d9d6d0"/>
<!-- window buttons -->
<circle cx="778" cy="16.6" r="3.4" fill="#6b6a66"/><circle cx="786.2" cy="16.6" r="3.4" fill="#6b6a66"/><rect x="784.6" y="15.4" width="3.2" height="2.4" fill="none" stroke="#3b3a37" stroke-width="0.5"/>
<circle cx="794.4" cy="16.6" r="3.4" fill="#e4572a"/><path d="M793.2,15.4 L795.6,17.8 M795.6,15.4 L793.2,17.8" stroke="#4a2010" stroke-width="0.6"/>
<!-- dock firefox -->
<defs><linearGradient id="ffg" x1="0.7" y1="0" x2="0.3" y2="1"><stop offset="0" stop-color="#ffd43a"/><stop offset="0.35" stop-color="#ff8a1e"/><stop offset="0.75" stop-color="#ff3d5a"/><stop offset="1" stop-color="#e0208a"/></linearGradient>
<radialGradient id="ffp" cx="0.4" cy="0.4" r="0.7"><stop offset="0" stop-color="#9a4df0"/><stop offset="1" stop-color="#5a2bbf"/></radialGradient></defs>
<path d="M17,14.5 Q23,17.5 23.5,24 Q23.5,33 14,33.8 Q5,33.5 4.6,24.5 Q4.6,19 8,16 Q7.5,19 9,20.5 Q10,16.5 13.5,15.5 Q12,17.5 13.5,18 Q17,17 17,14.5 Z" fill="url(#ffg)"/>
<circle cx="13.6" cy="24.2" r="5" fill="url(#ffp)"/>
<path d="M8.6,22 Q11,19.5 15.5,20.5 Q12,21.5 11.5,23.5 Q10.5,22.5 8.6,22 Z" fill="#ff9a2a"/>
<path d="M18.5,22 Q19.5,27 15,29.5 Q19.8,29.5 21,25 Z" fill="#ff5a3a" opacity="0.8"/>
<!-- dock files -->
<rect x="4.6" y="41.3" width="18.4" height="17.8" rx="1.5" fill="#c9c6c0"/>
<rect x="5.8" y="42.6" width="16" height="5" rx="0.6" fill="#3a2a22"/>
<rect x="6.4" y="44" width="14.8" height="1.1" fill="#e0662a"/><rect x="6.4" y="45.6" width="14.8" height="0.9" fill="#f0a040"/>
<rect x="4.6" y="48.6" width="18.4" height="10.5" rx="1" fill="#a9a6a0"/>
<rect x="11.3" y="52.3" width="5" height="3" rx="0.8" fill="none" stroke="#d8d5cf" stroke-width="0.7"/>
<circle cx="2" cy="47.5" r="0.8" fill="#e95420"/><circle cx="2" cy="51" r="0.8" fill="#e95420"/>
<!-- dock krita -->
<defs><linearGradient id="krg" x1="1" y1="0" x2="0" y2="1"><stop offset="0" stop-color="#f070c0"/><stop offset="0.45" stop-color="#b070e0"/><stop offset="0.55" stop-color="#ffffff"/><stop offset="0.7" stop-color="#40e0f0"/><stop offset="1" stop-color="#3060e0"/></linearGradient></defs>
<circle cx="14" cy="77.3" r="8.3" fill="url(#krg)"/>
<path d="M20.5,72 Q23,76 21.8,80 L19.5,78.5 Z" fill="#f0e040"/>
<path d="M5.8,68.5 L15.5,78.5" stroke="#151515" stroke-width="2.2" stroke-linecap="round"/>
<circle cx="2" cy="77" r="0.8" fill="#e95420"/>
<!-- app grid -->
<g fill="#ececec"><circle cx="9" cy="424" r="1.35"/><circle cx="14" cy="424" r="1.35"/><circle cx="19" cy="424" r="1.35"/><circle cx="9" cy="429" r="1.35"/><circle cx="14" cy="429" r="1.35"/><circle cx="19" cy="429" r="1.35"/><circle cx="9" cy="434" r="1.35"/><circle cx="14" cy="434" r="1.35"/><circle cx="19" cy="434" r="1.35"/></g>
<!-- toolbar icons -->
<g stroke="#cfcfcf" stroke-width="0.8" fill="none">
<path d="M36.8,37 L42.8,37 L42.8,42 L40.8,44 L36.8,44 Z M40.8,44 L40.8,42 L42.8,42"/>
<path d="M50.2,37.5 L53.5,37.5 L54.5,38.5 L57.3,38.5 L57.3,44 L50.2,44 Z M50.2,40 L57.3,40"/>
<path d="M64.2,37 L71,37 L71,44 L64.2,44 Z M66,37 L66,39.8 L69.2,39.8 L69.2,37 M65.8,44 L65.8,41.8 L69.4,41.8 L69.4,44"/>
<path d="M84.5,37.5 L86.5,37.5 Q89.5,38.5 89,41.5 Q88.5,44.5 85,44.5" stroke="#a0a0a0"/><path d="M84.5,36.3 L84.5,38.8 L86.2,37.5 Z" fill="#a0a0a0" stroke="none"/>
<path d="M102,38 Q98,38 98,41.2 Q98.5,44.5 101.5,44.5" stroke="#a0a0a0"/><path d="M102,36.3 L102,39 L100.5,37.7 Z" fill="#a0a0a0" stroke="none"/>
</g>
<!-- fg/bg -->
<rect x="148" y="35" width="7" height="6.5" fill="#000"/><rect x="151.5" y="39" width="7.5" height="6.5" fill="#fff"/><rect x="148" y="42" width="3" height="3" fill="#000"/><rect x="149" y="43" width="2" height="2" fill="#fff"/><path d="M156,35.5 L158.5,35.5 L158.5,38" stroke="#ddd" stroke-width="0.6" fill="none"/>
<!-- brush preset stroke -->
<path d="M169,44 Q171,40 176.5,36.5 L177.5,37.5 Q173,42 170,44.5 Z" fill="#1a1a1a"/><path d="M168,45 L177,45" stroke="#555" stroke-width="0.6"/>
<!-- grid icon -->
<g fill="#d0d0d0"><rect x="183.8" y="37" width="3" height="2.5"/><rect x="188" y="37" width="3" height="2.5"/><rect x="183.8" y="41.5" width="3" height="2.5"/><rect x="188" y="41.5" width="3" height="2.5"/></g>
<path d="M269.3,39.3 L272.7,39.3 L271,41 Z" fill="#d0d0d0"/>
<!-- eraser -->
<path d="M280.5,41.5 L285,37.5 L288,40 L284,44 L281.5,44 Z" fill="#e6e6e6"/><path d="M283,39.5 L286,42.3" stroke="#3c3b3e" stroke-width="0.6"/>
<!-- preserve alpha -->
<circle cx="297.8" cy="40" r="3.6" fill="#e6e6e6"/><g fill="#3c3b3e"><rect x="295.5" y="37.6" width="2.2" height="2.2"/><rect x="297.9" y="40" width="2.2" height="2.2"/></g>
<!-- reload -->
<circle cx="313.5" cy="40" r="2.6" stroke="#9a9a9a" stroke-width="0.7" fill="none"/>
<!-- spin arrows -->
<g fill="#c8c8c8"><path d="M380.6,37.6 L382.4,37.6 L381.5,36.4 Z"/><path d="M380.6,42.6 L382.4,42.6 L381.5,43.8 Z"/><path d="M385.8,39.6 L387.6,39.6 L386.7,40.8 Z"/>
<path d="M449,37.6 L451,37.6 L450,36.4 Z"/><path d="M449,42.6 L451,42.6 L450,43.8 Z"/><path d="M455,39.6 L456.8,39.6 L455.9,40.8 Z"/>
<path d="M478.6,39.3 L481.4,39.3 L480,40.6 Z"/><path d="M496.8,39.3 L499.6,39.3 L498.2,40.6 Z"/></g>
<path d="M481.9,34.5 L481.9,46 M500.5,34.5 L500.5,46" stroke="#555" stroke-width="0.6"/>
<!-- mirror icons -->
<path d="M467.5,44 L470.8,36.5 L470.8,44 Z M474.3,44 L471.6,36.5 L471.6,44 Z" fill="#e6e6e6"/>
<path d="M486,36.5 L494,39.8 L486,40.3 Z M486,43.8 L494,40.8 L486,41.2 Z" fill="#e6e6e6"/>
<!-- right toolbar icon -->
<path d="M788,37.5 L796,37.5 L796,43.5 L788,43.5 Z M789.5,39.5 L794.5,39.5 M789.5,41.5 L794.5,41.5" stroke="#d8d8d8" stroke-width="0.7" fill="none"/><path d="M795,42.5 L797.5,44.5" stroke="#d8d8d8" stroke-width="0.9"/>
<!-- canvas tab krita logo -->
<circle cx="67" cy="54.3" r="2.8" fill="#d878d8"/><path d="M64.4,55 A2.8,2.8 0 0 0 69.5,56 Q67,54.5 64.4,55 Z" fill="#50d5e6"/><path d="M64.8,52.6 L68.4,55.5" stroke="#222" stroke-width="0.7"/>
<!-- canvas close -->
<path d="M668.5,51.5 L673.5,56.5 M673.5,51.5 L668.5,56.5" stroke="#111" stroke-width="1.1"/>
<!-- scroll arrows -->
<path d="M676.3,64.8 L678.7,64.8 L677.5,63.4 Z M676.3,419.3 L678.7,419.3 L677.5,420.7 Z M670.3,424.3 L670.3,426.7 L671.7,425.5 Z M62.7,424.3 L62.7,426.7 L61.3,425.5 Z" fill="#d0d0d0"/>
<!-- toolbox icons -->
<g stroke="#d4d4d4" stroke-width="0.75" fill="none" stroke-linejoin="round">
<path d="M31.5,58.5 L31.5,65.5 L33.3,63.8 L34.8,66.5 L35.8,66 L34.5,63.3 L36.8,63.3 Z" fill="#d4d4d4"/>
<path d="M41.5,65.5 Q41,59 46.5,58.5 M44.5,61 L44.5,65 L47.5,63 Z"/>
<path d="M31.5,69 L36.5,69 L36.5,72 L31.5,72 Z M33,69 L33,72 M35,69 L35,72"/>
<path d="M42,71 L46,69.5 L47,72 L43,72 Z"/>
<path d="M30.8,90 L36.5,82 M31,90.5 L33.5,88.5" stroke-width="1.3" stroke="#e8e8e8"/>
<path d="M41.3,88.5 L47.5,82"/>
<path d="M30.8,92 L36.3,92 L36.3,97 L30.8,97 Z"/>
<path d="M41.5,96.5 Q41.5,92 44.5,92 Q47.5,92 47.5,96.5"/>
<path d="M30.8,108 L32.5,104 L36.5,104 L35,108.5 L31.5,109.5 Z"/>
<path d="M41.5,104 L47,106.7 L41.5,109.5 L43.5,106.7 Z"/>
<path d="M30.8,121 Q31,114 33.3,114.5 Q35.5,114 36,121 M31,114.5 L36,114.5"/>
<path d="M41.5,114.5 L47,114 M44.5,114 L44,121 M42,114.5 Q41,117 43,117"/>
<path d="M31,131.5 Q35,130 36,127 Q35.5,124.5 32,125.5"/>
<path d="M41.5,131 L47,125 M42.5,128 L46.5,126 M43,130.5 L45.5,129"/>
<path d="M31,138 L36,138 L36,143.3 L31,143.3 Z M30,138 L37,138 M30,143.3 L37,143.3"/>
<path d="M44,137.5 L44,144 M40.8,140.7 L47.2,140.7" stroke-width="1.1"/>
<path d="M32,148 L32,154 L37,154 M30.5,149.5 L35.5,149.5 L35.5,155.5"/>
<path d="M30.8,162 L36,162 L36,167.5 L30.8,167.5 Z"/><rect x="32.5" y="162" width="2" height="5.5" fill="#a8a8a8" stroke="none"/>
<path d="M41.5,168 L45.5,163.5 M44.5,162 L47,164.5" stroke-width="1.1"/>
<path d="M31,178 L35,173.5 M34,172.5 L36.5,175"/>
<path d="M41.5,177.5 L47,172.5 M42,173.5 L43,174.5 M46,176.5 L47,177.5"/>
<path d="M31,186.5 L33.5,184 L36.5,187 L34,189.5 Z" fill="#c0c0c0"/>
<path d="M31,202 L31,196 L36.5,202 Z M31,200 L33,200"/>
<path d="M47,196 L41.5,202 L47,202 M45,200 L47,200 M45,198 L47,198"/>
<path d="M30.8,209.5 L36.5,209.5 L36.5,215.5 L30.8,215.5 Z" stroke-dasharray="1 0.8"/>
<circle cx="44.2" cy="212.5" r="2.9" stroke-dasharray="1 0.8"/>
<path d="M31,224.5 L32,219.5 L36,219 L35.5,224.5 Z" stroke-dasharray="1 0.8"/>
<path d="M41.5,222 Q41.5,219 44,219 Q47,219 47,222 L47,224.5 M44,221 L44,222.5" stroke-dasharray="1 0.8"/>
<path d="M31,235.5 L34.5,232 M33.5,230 L36.5,230 M35,231.5 L36.5,233"/><circle cx="33" cy="231.5" r="1.5" fill="#d4d4d4" stroke="none"/>
<path d="M41.5,230 L47,230 L47,235.5 L41.5,235.5 Z M42.5,234.5 L46,231" stroke-dasharray="1 0.8"/>
<path d="M31,239.5 L36,239.5 L36,243 Q33.5,246 31,243 Z" stroke-dasharray="1 0.8"/>
<circle cx="34.3" cy="255" r="1.6"/><path d="M33.2,256.3 L31,258.5" stroke-width="1.1"/>
<path d="M41.5,254 L47,254 L47,259 L41.5,259 Z" fill="#d4d4d4" stroke-width="0.5"/>
</g>
<!-- docker title icons -->
<g stroke="#8a8a8a" stroke-width="0.6" fill="none">
<path d="M790,62.5 L793,62.5 L793,65.5 L790,65.5 Z M795,62.5 L798,65.5 M798,62.5 L795,65.5"/>
<path d="M790,167 L793,167 L793,170 L790,170 Z M795,167 L798,170 M798,167 L795,170"/>
<path d="M790.5,296 L793.5,299 M793.5,296 L790.5,299"/>
</g>
<!-- color selector -->
<defs>
<linearGradient id="ring" x1="0" y1="0" x2="1" y2="1"><stop offset="0" stop-color="#d8d8d8"/><stop offset="0.5" stop-color="#bdbdbd"/><stop offset="0.75" stop-color="#7a7a7a"/><stop offset="1" stop-color="#4a4a4a"/></linearGradient>
<linearGradient id="ring2" x1="0" y1="0.5" x2="1" y2="0.5"><stop offset="0" stop-color="#6a6a6a"/><stop offset="0.35" stop-color="#9a9a9a"/><stop offset="1" stop-color="#f0f0f0"/></linearGradient>
<linearGradient id="tri1" x1="0.5" y1="0" x2="0.1" y2="1"><stop offset="0" stop-color="#000"/><stop offset="1" stop-color="#fff"/></linearGradient>
<linearGradient id="tri2" x1="0" y1="0" x2="1" y2="0"><stop offset="0" stop-color="#fff" stop-opacity="0"/><stop offset="1" stop-color="#808080" stop-opacity="0.9"/></linearGradient>
</defs>
<defs><linearGradient id="tri" gradientUnits="userSpaceOnUse" x1="738.1" y1="74.6" x2="714.5" y2="114.5"><stop offset="0" stop-color="#000"/><stop offset="1" stop-color="#ececec"/></linearGradient></defs>
<path d="M738.1,74.6 L714.8,114.5 L759.9,114.5 Z" fill="url(#tri)"/>
<path d="M704.5,101.2 L710.5,101.2" stroke="#4a4a4a" stroke-width="1.5"/><path d="M704.5,102.4 L710.5,102.4" stroke="#9a9a9a" stroke-width="0.5"/>
<rect x="686.5" y="71.5" width="6" height="6" fill="none" stroke="#a8a8a8" stroke-width="0.6"/><path d="M686.5,73.5 L692.5,73.5" stroke="#a8a8a8" stroke-width="0.6"/>
<!-- splitter dots -->
<path d="M740,150.5 L746,150.5 M740,279.4 L746,279.4" stroke="#6a6a6a" stroke-width="0.7"/>
<!-- combos arrows -->
<g fill="#d0d0d0"><path d="M775.3,176.7 L778.3,176.7 L776.8,178.2 Z"/><path d="M793.8,177 L796.8,177 L795.3,178.5 Z"/><path d="M792,309.3 L795,309.3 L793.5,310.8 Z"/>
<path d="M795.5,186.5 L798.5,186.5 L797,185 Z"/><path d="M795.5,189 L798.5,189 L797,190.5 Z"/></g>
<path d="M784.5,174.5 L788.5,174.5 L787,177.5 L787,180 L786,180 L786,177.5 Z" stroke="#d0d0d0" stroke-width="0.6" fill="none"/>
<!-- eye -->
<path d="M685.5,199 Q688.3,195.5 691,199 Q688.3,202.5 685.5,199 Z" fill="#e0e0e0"/><circle cx="688.3" cy="199" r="1.2" fill="#39383b"/>
<path d="M697,197 L699.5,200.5 M696,201 L700,201" stroke="#333" stroke-width="0.5"/>
<path d="M705.5,195.5 L709.5,195.5 L709.5,198 L707,198 L706,199.5 L706,198 L705.5,198 Z" stroke="#b8c8d8" stroke-width="0.5" fill="none"/>
<g stroke="#8aa2b8" stroke-width="0.5" fill="none"><path d="M777,198 L781,198 L781,202 L777,202 Z"/><path d="M785,197 L789,202 M789,197 L785,202"/><circle cx="795.5" cy="199.5" r="2"/></g>
<!-- layer buttons -->
<g stroke="#d8d8d8" stroke-width="0.8" fill="none">
<path d="M685,269.3 L691.5,269.3 L691.5,275.8 L685,275.8 Z M688.2,270.8 L688.2,274.3 M686.5,272.5 L690,272.5"/>
<path d="M703.5,270.5 L708.8,270.5 L708.8,275.5 L703.5,275.5 Z M701.8,272 L701.8,277 L707,277"/>
<path d="M715,270.5 L718.5,274.5 L722,270.5"/>
<path d="M728.2,274.5 L732,270.5 L736,274.5"/>
<path d="M741.5,270 L749,270 M741.5,272.5 L749,272.5 M741.5,275 L749,275"/>
<path d="M790.2,271 L795.5,271 L795,276.5 L790.8,276.5 Z M789.6,270.3 L796.2,270.3 M791.8,269.3 L794,269.3"/>
</g>
<path d="M694.8,271.8 L697,271.8 L695.9,273 Z" fill="#d8d8d8"/>
<!-- statusbar icon -->
<path d="M31.5,433.5 L35.5,437.5 M35.5,433.5 L31.5,437.5" stroke="#69686b" stroke-width="0.5"/>
<rect x="792.5" y="433.5" width="3.5" height="4.5" fill="#5a9a9a"/>
</svg>

<div class="t" style="left:35.00px;top:3.81px;font-size:5.90px;color:#d9d6d0;transform:scaleX(1.287)">krita</div>
<div class="t" style="left:415.00px;top:4.11px;font-size:5.90px;color:#e4e2dc;font-weight:bold;transform:scaleX(0.947)">15</div>
<div class="t" style="left:424.00px;top:4.11px;font-size:5.90px;color:#e4e2dc;font-weight:bold;transform:scaleX(0.762)">:</div>
<div class="t" style="left:427.80px;top:4.11px;font-size:5.90px;color:#e4e2dc;font-weight:bold;transform:scaleX(0.978)">57</div>
<div class="t" style="left:354.00px;top:14.43px;font-size:6.58px;color:#dedbd4;font-weight:bold;transform:scaleX(0.944)">map_3d.pgm [Modified]&nbsp; (6.2M) * — Krita</div>
<div class="t" style="left:31.80px;top:24.96px;font-size:6.31px;color:#e2e2e2;transform:scaleX(0.886)">File</div>
<div class="t" style="left:47.00px;top:24.96px;font-size:6.31px;color:#e2e2e2;transform:scaleX(0.829)">Edit</div>
<div class="t" style="left:62.00px;top:24.96px;font-size:6.31px;color:#e2e2e2;transform:scaleX(0.812)">View</div>
<div class="t" style="left:79.00px;top:24.96px;font-size:6.31px;color:#e2e2e2;transform:scaleX(0.799)">Image</div>
<div class="t" style="left:99.00px;top:24.96px;font-size:6.31px;color:#e2e2e2;transform:scaleX(0.825)">Layer</div>
<div class="t" style="left:118.00px;top:24.96px;font-size:6.31px;color:#e2e2e2;transform:scaleX(0.799)">Select</div>
<div class="t" style="left:138.00px;top:24.96px;font-size:6.31px;color:#e2e2e2;transform:scaleX(0.857)">Filter</div>
<div class="t" style="left:156.00px;top:24.96px;font-size:6.31px;color:#e2e2e2;transform:scaleX(0.884)">Tools</div>
<div class="t" style="left:175.00px;top:24.96px;font-size:6.31px;color:#e2e2e2;transform:scaleX(0.826)">Settings</div>
<div class="t" style="left:199.50px;top:24.96px;font-size:6.31px;color:#e2e2e2;transform:scaleX(0.861)">Window</div>
<div class="t" style="left:225.00px;top:24.96px;font-size:6.31px;color:#e2e2e2;transform:scaleX(0.811)">Help</div>
<div class="t" style="left:197.60px;top:38.26px;font-size:5.49px;color:#dedede;transform:scaleX(0.987)">Normal</div>
<div class="t" style="left:334.80px;top:38.32px;font-size:5.76px;color:#e6e6e6;transform:scaleX(0.929)">Opacity: 1.00</div>
<div class="t" style="left:404.20px;top:38.32px;font-size:5.76px;color:#e0e0e0;transform:scaleX(0.893)">Size: 7.47 px</div>
<div class="t" style="left:332.30px;top:53.16px;font-size:5.49px;color:#d0d0d0;transform:scaleX(0.955)">map_3d.pgm [Modified]&nbsp; (6.2M)</div>
<div class="t" style="left:688.20px;top:52.66px;font-size:5.49px;color:#e0e0e0;transform:scaleX(0.856)">Advanced Color Selector</div>
<div class="t" style="left:750.50px;top:52.66px;font-size:5.49px;color:#dedede;transform:scaleX(0.886)">Overview</div>
<div class="t" style="left:685.20px;top:62.36px;font-size:5.49px;color:#e2e2e2;transform:scaleX(0.856)">Advanced Color Selector</div>
<div class="t" style="left:688.20px;top:156.16px;font-size:5.49px;color:#e0e0e0;transform:scaleX(0.822)">Layers</div>
<div class="t" style="left:712.20px;top:156.16px;font-size:5.49px;color:#dedede;transform:scaleX(0.844)">Channels</div>
<div class="t" style="left:685.00px;top:165.86px;font-size:5.49px;color:#e2e2e2;transform:scaleX(0.834)">Layers</div>
<div class="t" style="left:685.70px;top:174.86px;font-size:5.49px;color:#dedede;transform:scaleX(0.953)">Normal</div>
<div class="t" style="left:722.70px;top:186.16px;font-size:5.49px;color:#eeeeee;transform:scaleX(0.849)">Opacity:&nbsp; 100%</div>
<div class="t" style="left:719.70px;top:196.96px;font-size:5.49px;color:#eeeeee;transform:scaleX(0.866)">Layer 1</div>
<div class="t" style="left:687.80px;top:284.86px;font-size:5.49px;color:#e0e0e0;transform:scaleX(0.895)">Tool Options</div>
<div class="t" style="left:725.10px;top:284.86px;font-size:5.49px;color:#dedede;transform:scaleX(0.859)">Brush Presets</div>
<div class="t" style="left:684.70px;top:294.66px;font-size:5.49px;color:#e2e2e2;transform:scaleX(0.895)">Tool Options</div>
<div class="t" style="left:685.00px;top:307.66px;font-size:5.49px;color:#e2e2e2;transform:scaleX(0.869)">Brush Smoothing:</div>
<div class="t" style="left:737.50px;top:307.66px;font-size:5.49px;color:#e2e2e2;transform:scaleX(0.875)">Basic</div>
<div class="t" style="left:692.40px;top:322.66px;font-size:5.49px;color:#e2e2e2;transform:scaleX(0.864)">Snap to Assistants</div>
<div class="t" style="left:43.10px;top:434.26px;font-size:5.49px;color:#d0d0d0;transform:scaleX(0.903)">b) Basic-5 Size</div>
<div class="t" style="left:233.00px;top:434.46px;font-size:5.49px;color:#d0d0d0;transform:scaleX(0.963)">Grayscale/Alpha (8-bit integer/channel)&nbsp; gray built-in</div>
<div class="t" style="left:615.00px;top:434.31px;font-size:5.90px;color:#d0d0d0;transform:scaleX(0.834)">1562 x 1546 (6.2M)</div>
<div class="t" style="left:734.70px;top:434.31px;font-size:5.90px;color:#d0d0d0;transform:scaleX(0.852)">100%</div>
<div class="a" style="left:15px;top:71px;width:48px;height:30px;background:transparent;border:5px solid #e8202a"></div>
</body></html>
